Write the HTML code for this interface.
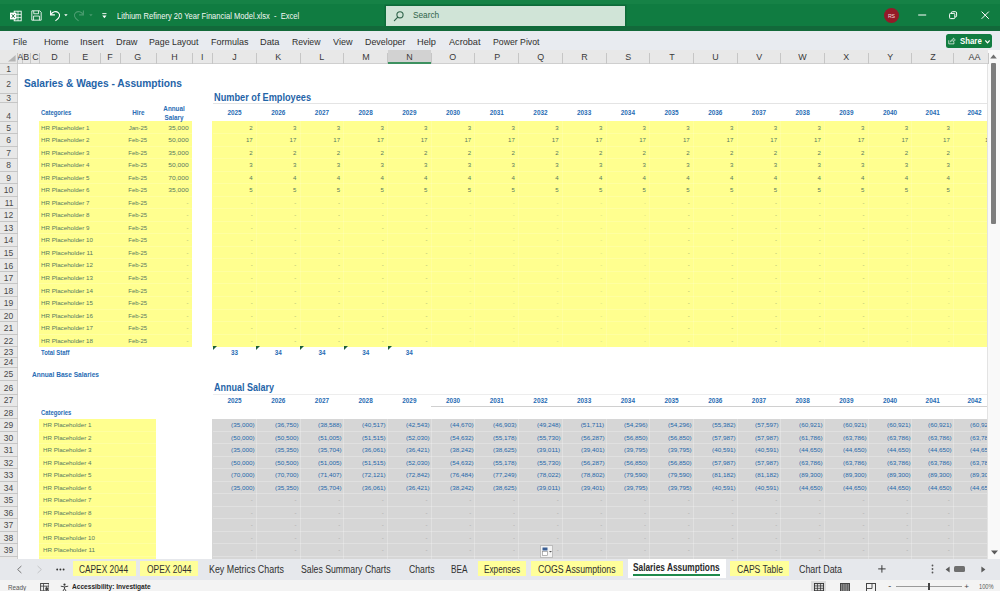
<!DOCTYPE html>
<html><head><meta charset="utf-8"><title>Excel</title>
<style>
html,body{margin:0;padding:0;}
body{width:1000px;height:591px;overflow:hidden;background:#fff;font-family:"Liberation Sans",sans-serif;position:relative;}
#app{position:absolute;left:0;top:0;width:1000px;height:591px;overflow:hidden;}
#app div,#app span,#app svg{position:absolute;display:block;white-space:pre;}
</style></head><body><div id="app">
<!-- sheet -->
<div style="left:39.30px;top:121.00px;width:152.80px;height:225.59px;background:#ffff8f;"></div>
<div style="left:212.30px;top:121.00px;width:775.70px;height:225.59px;background:#ffff8f;"></div>
<div style="left:39.30px;top:418.80px;width:116.70px;height:140.10px;background:#ffff8f;"></div>
<div style="left:211.90px;top:418.80px;width:776.10px;height:140.10px;background:#d6d6d6;"></div>
<div style="left:39.30px;top:133.03px;width:152.80px;height:1.00px;background:rgba(255,255,255,.16);"></div>
<div style="left:212.70px;top:133.03px;width:775.30px;height:1.00px;background:rgba(255,255,255,.16);"></div>
<div style="left:39.30px;top:145.57px;width:152.80px;height:1.00px;background:rgba(255,255,255,.16);"></div>
<div style="left:212.70px;top:145.57px;width:775.30px;height:1.00px;background:rgba(255,255,255,.16);"></div>
<div style="left:39.30px;top:158.10px;width:152.80px;height:1.00px;background:rgba(255,255,255,.16);"></div>
<div style="left:212.70px;top:158.10px;width:775.30px;height:1.00px;background:rgba(255,255,255,.16);"></div>
<div style="left:39.30px;top:170.63px;width:152.80px;height:1.00px;background:rgba(255,255,255,.16);"></div>
<div style="left:212.70px;top:170.63px;width:775.30px;height:1.00px;background:rgba(255,255,255,.16);"></div>
<div style="left:39.30px;top:183.16px;width:152.80px;height:1.00px;background:rgba(255,255,255,.16);"></div>
<div style="left:212.70px;top:183.16px;width:775.30px;height:1.00px;background:rgba(255,255,255,.16);"></div>
<div style="left:39.30px;top:195.70px;width:152.80px;height:1.00px;background:rgba(255,255,255,.16);"></div>
<div style="left:212.70px;top:195.70px;width:775.30px;height:1.00px;background:rgba(255,255,255,.16);"></div>
<div style="left:39.30px;top:208.23px;width:152.80px;height:1.00px;background:rgba(255,255,255,.16);"></div>
<div style="left:212.70px;top:208.23px;width:775.30px;height:1.00px;background:rgba(255,255,255,.16);"></div>
<div style="left:39.30px;top:220.76px;width:152.80px;height:1.00px;background:rgba(255,255,255,.16);"></div>
<div style="left:212.70px;top:220.76px;width:775.30px;height:1.00px;background:rgba(255,255,255,.16);"></div>
<div style="left:39.30px;top:233.30px;width:152.80px;height:1.00px;background:rgba(255,255,255,.16);"></div>
<div style="left:212.70px;top:233.30px;width:775.30px;height:1.00px;background:rgba(255,255,255,.16);"></div>
<div style="left:39.30px;top:245.83px;width:152.80px;height:1.00px;background:rgba(255,255,255,.16);"></div>
<div style="left:212.70px;top:245.83px;width:775.30px;height:1.00px;background:rgba(255,255,255,.16);"></div>
<div style="left:39.30px;top:258.36px;width:152.80px;height:1.00px;background:rgba(255,255,255,.16);"></div>
<div style="left:212.70px;top:258.36px;width:775.30px;height:1.00px;background:rgba(255,255,255,.16);"></div>
<div style="left:39.30px;top:270.90px;width:152.80px;height:1.00px;background:rgba(255,255,255,.16);"></div>
<div style="left:212.70px;top:270.90px;width:775.30px;height:1.00px;background:rgba(255,255,255,.16);"></div>
<div style="left:39.30px;top:283.43px;width:152.80px;height:1.00px;background:rgba(255,255,255,.16);"></div>
<div style="left:212.70px;top:283.43px;width:775.30px;height:1.00px;background:rgba(255,255,255,.16);"></div>
<div style="left:39.30px;top:295.96px;width:152.80px;height:1.00px;background:rgba(255,255,255,.16);"></div>
<div style="left:212.70px;top:295.96px;width:775.30px;height:1.00px;background:rgba(255,255,255,.16);"></div>
<div style="left:39.30px;top:308.50px;width:152.80px;height:1.00px;background:rgba(255,255,255,.16);"></div>
<div style="left:212.70px;top:308.50px;width:775.30px;height:1.00px;background:rgba(255,255,255,.16);"></div>
<div style="left:39.30px;top:321.03px;width:152.80px;height:1.00px;background:rgba(255,255,255,.16);"></div>
<div style="left:212.70px;top:321.03px;width:775.30px;height:1.00px;background:rgba(255,255,255,.16);"></div>
<div style="left:39.30px;top:333.56px;width:152.80px;height:1.00px;background:rgba(255,255,255,.16);"></div>
<div style="left:212.70px;top:333.56px;width:775.30px;height:1.00px;background:rgba(255,255,255,.16);"></div>
<div style="left:255.90px;top:121.00px;width:1.00px;height:225.59px;background:rgba(255,255,255,.14);"></div>
<div style="left:255.90px;top:418.80px;width:1.00px;height:140.10px;background:rgba(255,255,255,.24);"></div>
<div style="left:299.60px;top:121.00px;width:1.00px;height:225.59px;background:rgba(255,255,255,.14);"></div>
<div style="left:299.60px;top:418.80px;width:1.00px;height:140.10px;background:rgba(255,255,255,.24);"></div>
<div style="left:343.30px;top:121.00px;width:1.00px;height:225.59px;background:rgba(255,255,255,.14);"></div>
<div style="left:343.30px;top:418.80px;width:1.00px;height:140.10px;background:rgba(255,255,255,.24);"></div>
<div style="left:387.00px;top:121.00px;width:1.00px;height:225.59px;background:rgba(255,255,255,.14);"></div>
<div style="left:387.00px;top:418.80px;width:1.00px;height:140.10px;background:rgba(255,255,255,.24);"></div>
<div style="left:430.70px;top:121.00px;width:1.00px;height:225.59px;background:rgba(255,255,255,.14);"></div>
<div style="left:430.70px;top:418.80px;width:1.00px;height:140.10px;background:rgba(255,255,255,.24);"></div>
<div style="left:474.40px;top:121.00px;width:1.00px;height:225.59px;background:rgba(255,255,255,.14);"></div>
<div style="left:474.40px;top:418.80px;width:1.00px;height:140.10px;background:rgba(255,255,255,.24);"></div>
<div style="left:518.10px;top:121.00px;width:1.00px;height:225.59px;background:rgba(255,255,255,.14);"></div>
<div style="left:518.10px;top:418.80px;width:1.00px;height:140.10px;background:rgba(255,255,255,.24);"></div>
<div style="left:561.80px;top:121.00px;width:1.00px;height:225.59px;background:rgba(255,255,255,.14);"></div>
<div style="left:561.80px;top:418.80px;width:1.00px;height:140.10px;background:rgba(255,255,255,.24);"></div>
<div style="left:605.50px;top:121.00px;width:1.00px;height:225.59px;background:rgba(255,255,255,.14);"></div>
<div style="left:605.50px;top:418.80px;width:1.00px;height:140.10px;background:rgba(255,255,255,.24);"></div>
<div style="left:649.20px;top:121.00px;width:1.00px;height:225.59px;background:rgba(255,255,255,.14);"></div>
<div style="left:649.20px;top:418.80px;width:1.00px;height:140.10px;background:rgba(255,255,255,.24);"></div>
<div style="left:692.90px;top:121.00px;width:1.00px;height:225.59px;background:rgba(255,255,255,.14);"></div>
<div style="left:692.90px;top:418.80px;width:1.00px;height:140.10px;background:rgba(255,255,255,.24);"></div>
<div style="left:736.60px;top:121.00px;width:1.00px;height:225.59px;background:rgba(255,255,255,.14);"></div>
<div style="left:736.60px;top:418.80px;width:1.00px;height:140.10px;background:rgba(255,255,255,.24);"></div>
<div style="left:780.30px;top:121.00px;width:1.00px;height:225.59px;background:rgba(255,255,255,.14);"></div>
<div style="left:780.30px;top:418.80px;width:1.00px;height:140.10px;background:rgba(255,255,255,.24);"></div>
<div style="left:824.00px;top:121.00px;width:1.00px;height:225.59px;background:rgba(255,255,255,.14);"></div>
<div style="left:824.00px;top:418.80px;width:1.00px;height:140.10px;background:rgba(255,255,255,.24);"></div>
<div style="left:867.70px;top:121.00px;width:1.00px;height:225.59px;background:rgba(255,255,255,.14);"></div>
<div style="left:867.70px;top:418.80px;width:1.00px;height:140.10px;background:rgba(255,255,255,.24);"></div>
<div style="left:911.40px;top:121.00px;width:1.00px;height:225.59px;background:rgba(255,255,255,.14);"></div>
<div style="left:911.40px;top:418.80px;width:1.00px;height:140.10px;background:rgba(255,255,255,.24);"></div>
<div style="left:953.00px;top:121.00px;width:1.00px;height:225.59px;background:rgba(255,255,255,.14);"></div>
<div style="left:953.00px;top:418.80px;width:1.00px;height:140.10px;background:rgba(255,255,255,.24);"></div>
<div style="left:212.70px;top:430.80px;width:775.30px;height:1.00px;background:rgba(255,255,255,.24);"></div>
<div style="left:39.30px;top:430.80px;width:116.70px;height:1.00px;background:rgba(255,255,255,.16);"></div>
<div style="left:212.70px;top:443.30px;width:775.30px;height:1.00px;background:rgba(255,255,255,.24);"></div>
<div style="left:39.30px;top:443.30px;width:116.70px;height:1.00px;background:rgba(255,255,255,.16);"></div>
<div style="left:212.70px;top:455.80px;width:775.30px;height:1.00px;background:rgba(255,255,255,.24);"></div>
<div style="left:39.30px;top:455.80px;width:116.70px;height:1.00px;background:rgba(255,255,255,.16);"></div>
<div style="left:212.70px;top:468.30px;width:775.30px;height:1.00px;background:rgba(255,255,255,.24);"></div>
<div style="left:39.30px;top:468.30px;width:116.70px;height:1.00px;background:rgba(255,255,255,.16);"></div>
<div style="left:212.70px;top:480.80px;width:775.30px;height:1.00px;background:rgba(255,255,255,.24);"></div>
<div style="left:39.30px;top:480.80px;width:116.70px;height:1.00px;background:rgba(255,255,255,.16);"></div>
<div style="left:212.70px;top:493.30px;width:775.30px;height:1.00px;background:rgba(255,255,255,.24);"></div>
<div style="left:39.30px;top:493.30px;width:116.70px;height:1.00px;background:rgba(255,255,255,.16);"></div>
<div style="left:212.70px;top:505.80px;width:775.30px;height:1.00px;background:rgba(255,255,255,.24);"></div>
<div style="left:39.30px;top:505.80px;width:116.70px;height:1.00px;background:rgba(255,255,255,.16);"></div>
<div style="left:212.70px;top:518.30px;width:775.30px;height:1.00px;background:rgba(255,255,255,.24);"></div>
<div style="left:39.30px;top:518.30px;width:116.70px;height:1.00px;background:rgba(255,255,255,.16);"></div>
<div style="left:212.70px;top:530.80px;width:775.30px;height:1.00px;background:rgba(255,255,255,.24);"></div>
<div style="left:39.30px;top:530.80px;width:116.70px;height:1.00px;background:rgba(255,255,255,.16);"></div>
<div style="left:212.70px;top:543.30px;width:775.30px;height:1.00px;background:rgba(255,255,255,.24);"></div>
<div style="left:39.30px;top:543.30px;width:116.70px;height:1.00px;background:rgba(255,255,255,.16);"></div>
<div style="left:212.70px;top:555.80px;width:775.30px;height:1.00px;background:rgba(255,255,255,.24);"></div>
<div style="left:39.30px;top:555.80px;width:116.70px;height:1.00px;background:rgba(255,255,255,.16);"></div>
<div style="left:212.70px;top:102.50px;width:775.30px;height:1.00px;background:#e4e4e4;"></div>
<div style="left:212.70px;top:393.50px;width:775.30px;height:1.00px;background:#ededed;"></div>
<div style="left:431.20px;top:405.50px;width:556.80px;height:1.00px;background:#d0d0d0;"></div>
<span style="left:24.00px;top:77.10px;font-size:11.5px;line-height:13.80px;color:#1f64a8;font-weight:bold;transform:scaleX(0.887);transform-origin:left center;">Salaries &amp; Wages - Assumptions</span>
<span style="left:214.00px;top:91.60px;font-size:10px;line-height:12.00px;color:#1f64a8;font-weight:bold;transform:scaleX(0.919);transform-origin:left center;">Number of Employees</span>
<span style="left:214.00px;top:382.00px;font-size:10px;line-height:12.00px;color:#1f64a8;font-weight:bold;transform:scaleX(0.900);transform-origin:left center;">Annual Salary</span>
<span style="left:32.00px;top:370.70px;font-size:6.5px;line-height:7.80px;color:#286cb4;font-weight:bold;transform:scaleX(1.013);transform-origin:left center;">Annual Base Salaries</span>
<span style="left:40.50px;top:109.12px;font-size:6.3px;line-height:7.56px;color:#286cb4;font-weight:bold;transform:scaleX(0.931);transform-origin:left center;">Categories</span>
<span style="left:132.17px;top:109.12px;font-size:6.3px;line-height:7.56px;color:#286cb4;font-weight:bold;">Hire</span>
<span style="left:163.33px;top:104.82px;font-size:6.3px;line-height:7.56px;color:#286cb4;font-weight:bold;">Annual</span>
<span style="left:164.54px;top:113.82px;font-size:6.3px;line-height:7.56px;color:#286cb4;font-weight:bold;">Salary</span>
<span style="left:40.50px;top:409.02px;font-size:6.3px;line-height:7.56px;color:#286cb4;font-weight:bold;transform:scaleX(0.931);transform-origin:left center;">Categories</span>
<span style="left:40.60px;top:349.42px;font-size:6.3px;line-height:7.56px;color:#286cb4;font-weight:bold;transform:scaleX(0.936);transform-origin:left center;">Total Staff</span>
<span style="left:227.43px;top:109.06px;font-size:6.4px;line-height:7.68px;color:#286cb4;font-weight:bold;">2025</span>
<span style="left:227.43px;top:397.16px;font-size:6.4px;line-height:7.68px;color:#286cb4;font-weight:bold;">2025</span>
<span style="left:271.13px;top:109.06px;font-size:6.4px;line-height:7.68px;color:#286cb4;font-weight:bold;">2026</span>
<span style="left:271.13px;top:397.16px;font-size:6.4px;line-height:7.68px;color:#286cb4;font-weight:bold;">2026</span>
<span style="left:314.83px;top:109.06px;font-size:6.4px;line-height:7.68px;color:#286cb4;font-weight:bold;">2027</span>
<span style="left:314.83px;top:397.16px;font-size:6.4px;line-height:7.68px;color:#286cb4;font-weight:bold;">2027</span>
<span style="left:358.53px;top:109.06px;font-size:6.4px;line-height:7.68px;color:#286cb4;font-weight:bold;">2028</span>
<span style="left:358.53px;top:397.16px;font-size:6.4px;line-height:7.68px;color:#286cb4;font-weight:bold;">2028</span>
<span style="left:402.23px;top:109.06px;font-size:6.4px;line-height:7.68px;color:#286cb4;font-weight:bold;">2029</span>
<span style="left:402.23px;top:397.16px;font-size:6.4px;line-height:7.68px;color:#286cb4;font-weight:bold;">2029</span>
<span style="left:445.93px;top:109.06px;font-size:6.4px;line-height:7.68px;color:#286cb4;font-weight:bold;">2030</span>
<span style="left:445.93px;top:397.16px;font-size:6.4px;line-height:7.68px;color:#286cb4;font-weight:bold;">2030</span>
<span style="left:489.63px;top:109.06px;font-size:6.4px;line-height:7.68px;color:#286cb4;font-weight:bold;">2031</span>
<span style="left:489.63px;top:397.16px;font-size:6.4px;line-height:7.68px;color:#286cb4;font-weight:bold;">2031</span>
<span style="left:533.33px;top:109.06px;font-size:6.4px;line-height:7.68px;color:#286cb4;font-weight:bold;">2032</span>
<span style="left:533.33px;top:397.16px;font-size:6.4px;line-height:7.68px;color:#286cb4;font-weight:bold;">2032</span>
<span style="left:577.03px;top:109.06px;font-size:6.4px;line-height:7.68px;color:#286cb4;font-weight:bold;">2033</span>
<span style="left:577.03px;top:397.16px;font-size:6.4px;line-height:7.68px;color:#286cb4;font-weight:bold;">2033</span>
<span style="left:620.73px;top:109.06px;font-size:6.4px;line-height:7.68px;color:#286cb4;font-weight:bold;">2034</span>
<span style="left:620.73px;top:397.16px;font-size:6.4px;line-height:7.68px;color:#286cb4;font-weight:bold;">2034</span>
<span style="left:664.43px;top:109.06px;font-size:6.4px;line-height:7.68px;color:#286cb4;font-weight:bold;">2035</span>
<span style="left:664.43px;top:397.16px;font-size:6.4px;line-height:7.68px;color:#286cb4;font-weight:bold;">2035</span>
<span style="left:708.13px;top:109.06px;font-size:6.4px;line-height:7.68px;color:#286cb4;font-weight:bold;">2036</span>
<span style="left:708.13px;top:397.16px;font-size:6.4px;line-height:7.68px;color:#286cb4;font-weight:bold;">2036</span>
<span style="left:751.83px;top:109.06px;font-size:6.4px;line-height:7.68px;color:#286cb4;font-weight:bold;">2037</span>
<span style="left:751.83px;top:397.16px;font-size:6.4px;line-height:7.68px;color:#286cb4;font-weight:bold;">2037</span>
<span style="left:795.53px;top:109.06px;font-size:6.4px;line-height:7.68px;color:#286cb4;font-weight:bold;">2038</span>
<span style="left:795.53px;top:397.16px;font-size:6.4px;line-height:7.68px;color:#286cb4;font-weight:bold;">2038</span>
<span style="left:839.23px;top:109.06px;font-size:6.4px;line-height:7.68px;color:#286cb4;font-weight:bold;">2039</span>
<span style="left:839.23px;top:397.16px;font-size:6.4px;line-height:7.68px;color:#286cb4;font-weight:bold;">2039</span>
<span style="left:882.93px;top:109.06px;font-size:6.4px;line-height:7.68px;color:#286cb4;font-weight:bold;">2040</span>
<span style="left:882.93px;top:397.16px;font-size:6.4px;line-height:7.68px;color:#286cb4;font-weight:bold;">2040</span>
<span style="left:925.58px;top:109.06px;font-size:6.4px;line-height:7.68px;color:#286cb4;font-weight:bold;">2041</span>
<span style="left:925.58px;top:397.16px;font-size:6.4px;line-height:7.68px;color:#286cb4;font-weight:bold;">2041</span>
<span style="left:967.38px;top:109.06px;font-size:6.4px;line-height:7.68px;color:#286cb4;font-weight:bold;">2042</span>
<span style="left:967.38px;top:397.16px;font-size:6.4px;line-height:7.68px;color:#286cb4;font-weight:bold;">2042</span>
<span style="left:41.00px;top:123.61px;font-size:6.1px;line-height:7.32px;color:#56795f;transform:scaleX(1.014);transform-origin:left center;">HR Placeholder 1</span>
<span style="left:128.67px;top:123.61px;font-size:6.1px;line-height:7.32px;color:#56795f;">Jan-25</span>
<span style="left:170.34px;top:123.61px;font-size:6.1px;line-height:7.32px;color:#56795f;transform:scaleX(1.093);transform-origin:right center;">35,000</span>
<span style="left:249.31px;top:123.61px;font-size:6.1px;line-height:7.32px;color:#56795f;">2</span>
<span style="left:293.01px;top:123.61px;font-size:6.1px;line-height:7.32px;color:#56795f;">3</span>
<span style="left:336.71px;top:123.61px;font-size:6.1px;line-height:7.32px;color:#56795f;">3</span>
<span style="left:380.41px;top:123.61px;font-size:6.1px;line-height:7.32px;color:#56795f;">3</span>
<span style="left:424.11px;top:123.61px;font-size:6.1px;line-height:7.32px;color:#56795f;">3</span>
<span style="left:467.81px;top:123.61px;font-size:6.1px;line-height:7.32px;color:#56795f;">3</span>
<span style="left:511.51px;top:123.61px;font-size:6.1px;line-height:7.32px;color:#56795f;">3</span>
<span style="left:555.21px;top:123.61px;font-size:6.1px;line-height:7.32px;color:#56795f;">3</span>
<span style="left:598.91px;top:123.61px;font-size:6.1px;line-height:7.32px;color:#56795f;">3</span>
<span style="left:642.61px;top:123.61px;font-size:6.1px;line-height:7.32px;color:#56795f;">3</span>
<span style="left:686.31px;top:123.61px;font-size:6.1px;line-height:7.32px;color:#56795f;">3</span>
<span style="left:730.01px;top:123.61px;font-size:6.1px;line-height:7.32px;color:#56795f;">3</span>
<span style="left:773.71px;top:123.61px;font-size:6.1px;line-height:7.32px;color:#56795f;">3</span>
<span style="left:817.41px;top:123.61px;font-size:6.1px;line-height:7.32px;color:#56795f;">3</span>
<span style="left:861.11px;top:123.61px;font-size:6.1px;line-height:7.32px;color:#56795f;">3</span>
<span style="left:904.81px;top:123.61px;font-size:6.1px;line-height:7.32px;color:#56795f;">3</span>
<span style="left:946.41px;top:123.61px;font-size:6.1px;line-height:7.32px;color:#56795f;">3</span>
<span style="left:988.41px;top:123.61px;font-size:6.1px;line-height:7.32px;color:#56795f;">3</span>
<span style="left:41.00px;top:136.14px;font-size:6.1px;line-height:7.32px;color:#56795f;transform:scaleX(1.014);transform-origin:left center;">HR Placeholder 2</span>
<span style="left:128.34px;top:136.14px;font-size:6.1px;line-height:7.32px;color:#56795f;transform:scaleX(0.967);transform-origin:center center;">Feb-25</span>
<span style="left:170.34px;top:136.14px;font-size:6.1px;line-height:7.32px;color:#56795f;transform:scaleX(1.093);transform-origin:right center;">50,000</span>
<span style="left:245.91px;top:136.14px;font-size:6.1px;line-height:7.32px;color:#56795f;">17</span>
<span style="left:289.61px;top:136.14px;font-size:6.1px;line-height:7.32px;color:#56795f;">17</span>
<span style="left:333.31px;top:136.14px;font-size:6.1px;line-height:7.32px;color:#56795f;">17</span>
<span style="left:377.01px;top:136.14px;font-size:6.1px;line-height:7.32px;color:#56795f;">17</span>
<span style="left:420.71px;top:136.14px;font-size:6.1px;line-height:7.32px;color:#56795f;">17</span>
<span style="left:464.41px;top:136.14px;font-size:6.1px;line-height:7.32px;color:#56795f;">17</span>
<span style="left:508.11px;top:136.14px;font-size:6.1px;line-height:7.32px;color:#56795f;">17</span>
<span style="left:551.81px;top:136.14px;font-size:6.1px;line-height:7.32px;color:#56795f;">17</span>
<span style="left:595.51px;top:136.14px;font-size:6.1px;line-height:7.32px;color:#56795f;">17</span>
<span style="left:639.21px;top:136.14px;font-size:6.1px;line-height:7.32px;color:#56795f;">17</span>
<span style="left:682.91px;top:136.14px;font-size:6.1px;line-height:7.32px;color:#56795f;">17</span>
<span style="left:726.61px;top:136.14px;font-size:6.1px;line-height:7.32px;color:#56795f;">17</span>
<span style="left:770.31px;top:136.14px;font-size:6.1px;line-height:7.32px;color:#56795f;">17</span>
<span style="left:814.01px;top:136.14px;font-size:6.1px;line-height:7.32px;color:#56795f;">17</span>
<span style="left:857.71px;top:136.14px;font-size:6.1px;line-height:7.32px;color:#56795f;">17</span>
<span style="left:901.41px;top:136.14px;font-size:6.1px;line-height:7.32px;color:#56795f;">17</span>
<span style="left:943.01px;top:136.14px;font-size:6.1px;line-height:7.32px;color:#56795f;">17</span>
<span style="left:985.01px;top:136.14px;font-size:6.1px;line-height:7.32px;color:#56795f;">17</span>
<span style="left:41.00px;top:148.67px;font-size:6.1px;line-height:7.32px;color:#56795f;transform:scaleX(1.014);transform-origin:left center;">HR Placeholder 3</span>
<span style="left:128.34px;top:148.67px;font-size:6.1px;line-height:7.32px;color:#56795f;transform:scaleX(0.967);transform-origin:center center;">Feb-25</span>
<span style="left:170.34px;top:148.67px;font-size:6.1px;line-height:7.32px;color:#56795f;transform:scaleX(1.093);transform-origin:right center;">35,000</span>
<span style="left:249.31px;top:148.67px;font-size:6.1px;line-height:7.32px;color:#56795f;">2</span>
<span style="left:293.01px;top:148.67px;font-size:6.1px;line-height:7.32px;color:#56795f;">2</span>
<span style="left:336.71px;top:148.67px;font-size:6.1px;line-height:7.32px;color:#56795f;">2</span>
<span style="left:380.41px;top:148.67px;font-size:6.1px;line-height:7.32px;color:#56795f;">2</span>
<span style="left:424.11px;top:148.67px;font-size:6.1px;line-height:7.32px;color:#56795f;">2</span>
<span style="left:467.81px;top:148.67px;font-size:6.1px;line-height:7.32px;color:#56795f;">2</span>
<span style="left:511.51px;top:148.67px;font-size:6.1px;line-height:7.32px;color:#56795f;">2</span>
<span style="left:555.21px;top:148.67px;font-size:6.1px;line-height:7.32px;color:#56795f;">2</span>
<span style="left:598.91px;top:148.67px;font-size:6.1px;line-height:7.32px;color:#56795f;">2</span>
<span style="left:642.61px;top:148.67px;font-size:6.1px;line-height:7.32px;color:#56795f;">2</span>
<span style="left:686.31px;top:148.67px;font-size:6.1px;line-height:7.32px;color:#56795f;">2</span>
<span style="left:730.01px;top:148.67px;font-size:6.1px;line-height:7.32px;color:#56795f;">2</span>
<span style="left:773.71px;top:148.67px;font-size:6.1px;line-height:7.32px;color:#56795f;">2</span>
<span style="left:817.41px;top:148.67px;font-size:6.1px;line-height:7.32px;color:#56795f;">2</span>
<span style="left:861.11px;top:148.67px;font-size:6.1px;line-height:7.32px;color:#56795f;">2</span>
<span style="left:904.81px;top:148.67px;font-size:6.1px;line-height:7.32px;color:#56795f;">2</span>
<span style="left:946.41px;top:148.67px;font-size:6.1px;line-height:7.32px;color:#56795f;">2</span>
<span style="left:988.41px;top:148.67px;font-size:6.1px;line-height:7.32px;color:#56795f;">2</span>
<span style="left:41.00px;top:161.21px;font-size:6.1px;line-height:7.32px;color:#56795f;transform:scaleX(1.014);transform-origin:left center;">HR Placeholder 4</span>
<span style="left:128.34px;top:161.21px;font-size:6.1px;line-height:7.32px;color:#56795f;transform:scaleX(0.967);transform-origin:center center;">Feb-25</span>
<span style="left:170.34px;top:161.21px;font-size:6.1px;line-height:7.32px;color:#56795f;transform:scaleX(1.093);transform-origin:right center;">50,000</span>
<span style="left:249.31px;top:161.21px;font-size:6.1px;line-height:7.32px;color:#56795f;">3</span>
<span style="left:293.01px;top:161.21px;font-size:6.1px;line-height:7.32px;color:#56795f;">3</span>
<span style="left:336.71px;top:161.21px;font-size:6.1px;line-height:7.32px;color:#56795f;">3</span>
<span style="left:380.41px;top:161.21px;font-size:6.1px;line-height:7.32px;color:#56795f;">3</span>
<span style="left:424.11px;top:161.21px;font-size:6.1px;line-height:7.32px;color:#56795f;">3</span>
<span style="left:467.81px;top:161.21px;font-size:6.1px;line-height:7.32px;color:#56795f;">3</span>
<span style="left:511.51px;top:161.21px;font-size:6.1px;line-height:7.32px;color:#56795f;">3</span>
<span style="left:555.21px;top:161.21px;font-size:6.1px;line-height:7.32px;color:#56795f;">3</span>
<span style="left:598.91px;top:161.21px;font-size:6.1px;line-height:7.32px;color:#56795f;">3</span>
<span style="left:642.61px;top:161.21px;font-size:6.1px;line-height:7.32px;color:#56795f;">3</span>
<span style="left:686.31px;top:161.21px;font-size:6.1px;line-height:7.32px;color:#56795f;">3</span>
<span style="left:730.01px;top:161.21px;font-size:6.1px;line-height:7.32px;color:#56795f;">3</span>
<span style="left:773.71px;top:161.21px;font-size:6.1px;line-height:7.32px;color:#56795f;">3</span>
<span style="left:817.41px;top:161.21px;font-size:6.1px;line-height:7.32px;color:#56795f;">3</span>
<span style="left:861.11px;top:161.21px;font-size:6.1px;line-height:7.32px;color:#56795f;">3</span>
<span style="left:904.81px;top:161.21px;font-size:6.1px;line-height:7.32px;color:#56795f;">3</span>
<span style="left:946.41px;top:161.21px;font-size:6.1px;line-height:7.32px;color:#56795f;">3</span>
<span style="left:988.41px;top:161.21px;font-size:6.1px;line-height:7.32px;color:#56795f;">3</span>
<span style="left:41.00px;top:173.74px;font-size:6.1px;line-height:7.32px;color:#56795f;transform:scaleX(1.014);transform-origin:left center;">HR Placeholder 5</span>
<span style="left:128.34px;top:173.74px;font-size:6.1px;line-height:7.32px;color:#56795f;transform:scaleX(0.967);transform-origin:center center;">Feb-25</span>
<span style="left:170.34px;top:173.74px;font-size:6.1px;line-height:7.32px;color:#56795f;transform:scaleX(1.093);transform-origin:right center;">70,000</span>
<span style="left:249.31px;top:173.74px;font-size:6.1px;line-height:7.32px;color:#56795f;">4</span>
<span style="left:293.01px;top:173.74px;font-size:6.1px;line-height:7.32px;color:#56795f;">4</span>
<span style="left:336.71px;top:173.74px;font-size:6.1px;line-height:7.32px;color:#56795f;">4</span>
<span style="left:380.41px;top:173.74px;font-size:6.1px;line-height:7.32px;color:#56795f;">4</span>
<span style="left:424.11px;top:173.74px;font-size:6.1px;line-height:7.32px;color:#56795f;">4</span>
<span style="left:467.81px;top:173.74px;font-size:6.1px;line-height:7.32px;color:#56795f;">4</span>
<span style="left:511.51px;top:173.74px;font-size:6.1px;line-height:7.32px;color:#56795f;">4</span>
<span style="left:555.21px;top:173.74px;font-size:6.1px;line-height:7.32px;color:#56795f;">4</span>
<span style="left:598.91px;top:173.74px;font-size:6.1px;line-height:7.32px;color:#56795f;">4</span>
<span style="left:642.61px;top:173.74px;font-size:6.1px;line-height:7.32px;color:#56795f;">4</span>
<span style="left:686.31px;top:173.74px;font-size:6.1px;line-height:7.32px;color:#56795f;">4</span>
<span style="left:730.01px;top:173.74px;font-size:6.1px;line-height:7.32px;color:#56795f;">4</span>
<span style="left:773.71px;top:173.74px;font-size:6.1px;line-height:7.32px;color:#56795f;">4</span>
<span style="left:817.41px;top:173.74px;font-size:6.1px;line-height:7.32px;color:#56795f;">4</span>
<span style="left:861.11px;top:173.74px;font-size:6.1px;line-height:7.32px;color:#56795f;">4</span>
<span style="left:904.81px;top:173.74px;font-size:6.1px;line-height:7.32px;color:#56795f;">4</span>
<span style="left:946.41px;top:173.74px;font-size:6.1px;line-height:7.32px;color:#56795f;">4</span>
<span style="left:988.41px;top:173.74px;font-size:6.1px;line-height:7.32px;color:#56795f;">4</span>
<span style="left:41.00px;top:186.27px;font-size:6.1px;line-height:7.32px;color:#56795f;transform:scaleX(1.014);transform-origin:left center;">HR Placeholder 6</span>
<span style="left:128.34px;top:186.27px;font-size:6.1px;line-height:7.32px;color:#56795f;transform:scaleX(0.967);transform-origin:center center;">Feb-25</span>
<span style="left:170.34px;top:186.27px;font-size:6.1px;line-height:7.32px;color:#56795f;transform:scaleX(1.093);transform-origin:right center;">35,000</span>
<span style="left:249.31px;top:186.27px;font-size:6.1px;line-height:7.32px;color:#56795f;">5</span>
<span style="left:293.01px;top:186.27px;font-size:6.1px;line-height:7.32px;color:#56795f;">5</span>
<span style="left:336.71px;top:186.27px;font-size:6.1px;line-height:7.32px;color:#56795f;">5</span>
<span style="left:380.41px;top:186.27px;font-size:6.1px;line-height:7.32px;color:#56795f;">5</span>
<span style="left:424.11px;top:186.27px;font-size:6.1px;line-height:7.32px;color:#56795f;">5</span>
<span style="left:467.81px;top:186.27px;font-size:6.1px;line-height:7.32px;color:#56795f;">5</span>
<span style="left:511.51px;top:186.27px;font-size:6.1px;line-height:7.32px;color:#56795f;">5</span>
<span style="left:555.21px;top:186.27px;font-size:6.1px;line-height:7.32px;color:#56795f;">5</span>
<span style="left:598.91px;top:186.27px;font-size:6.1px;line-height:7.32px;color:#56795f;">5</span>
<span style="left:642.61px;top:186.27px;font-size:6.1px;line-height:7.32px;color:#56795f;">5</span>
<span style="left:686.31px;top:186.27px;font-size:6.1px;line-height:7.32px;color:#56795f;">5</span>
<span style="left:730.01px;top:186.27px;font-size:6.1px;line-height:7.32px;color:#56795f;">5</span>
<span style="left:773.71px;top:186.27px;font-size:6.1px;line-height:7.32px;color:#56795f;">5</span>
<span style="left:817.41px;top:186.27px;font-size:6.1px;line-height:7.32px;color:#56795f;">5</span>
<span style="left:861.11px;top:186.27px;font-size:6.1px;line-height:7.32px;color:#56795f;">5</span>
<span style="left:904.81px;top:186.27px;font-size:6.1px;line-height:7.32px;color:#56795f;">5</span>
<span style="left:946.41px;top:186.27px;font-size:6.1px;line-height:7.32px;color:#56795f;">5</span>
<span style="left:988.41px;top:186.27px;font-size:6.1px;line-height:7.32px;color:#56795f;">5</span>
<span style="left:41.00px;top:198.80px;font-size:6.1px;line-height:7.32px;color:#56795f;transform:scaleX(1.014);transform-origin:left center;">HR Placeholder 7</span>
<span style="left:128.34px;top:198.80px;font-size:6.1px;line-height:7.32px;color:#56795f;transform:scaleX(0.967);transform-origin:center center;">Feb-25</span>
<span style="left:186.47px;top:198.80px;font-size:6.1px;line-height:7.32px;color:#56795f;opacity:.55;">-</span>
<span style="left:250.67px;top:198.80px;font-size:6.1px;line-height:7.32px;color:#56795f;opacity:.6;">-</span>
<span style="left:294.37px;top:198.80px;font-size:6.1px;line-height:7.32px;color:#56795f;opacity:.6;">-</span>
<span style="left:338.07px;top:198.80px;font-size:6.1px;line-height:7.32px;color:#56795f;opacity:.6;">-</span>
<span style="left:381.77px;top:198.80px;font-size:6.1px;line-height:7.32px;color:#56795f;opacity:.6;">-</span>
<span style="left:425.47px;top:198.80px;font-size:6.1px;line-height:7.32px;color:#56795f;opacity:.6;">-</span>
<span style="left:469.17px;top:198.80px;font-size:6.1px;line-height:7.32px;color:#56795f;opacity:.3;">-</span>
<span style="left:512.87px;top:198.80px;font-size:6.1px;line-height:7.32px;color:#56795f;opacity:.3;">-</span>
<span style="left:556.57px;top:198.80px;font-size:6.1px;line-height:7.32px;color:#56795f;opacity:.3;">-</span>
<span style="left:600.27px;top:198.80px;font-size:6.1px;line-height:7.32px;color:#56795f;opacity:.3;">-</span>
<span style="left:643.97px;top:198.80px;font-size:6.1px;line-height:7.32px;color:#56795f;opacity:.3;">-</span>
<span style="left:687.67px;top:198.80px;font-size:6.1px;line-height:7.32px;color:#56795f;opacity:.6;">-</span>
<span style="left:731.37px;top:198.80px;font-size:6.1px;line-height:7.32px;color:#56795f;opacity:.6;">-</span>
<span style="left:775.07px;top:198.80px;font-size:6.1px;line-height:7.32px;color:#56795f;opacity:.6;">-</span>
<span style="left:818.77px;top:198.80px;font-size:6.1px;line-height:7.32px;color:#56795f;opacity:.6;">-</span>
<span style="left:862.47px;top:198.80px;font-size:6.1px;line-height:7.32px;color:#56795f;opacity:.6;">-</span>
<span style="left:906.17px;top:198.80px;font-size:6.1px;line-height:7.32px;color:#56795f;opacity:.3;">-</span>
<span style="left:947.77px;top:198.80px;font-size:6.1px;line-height:7.32px;color:#56795f;opacity:.3;">-</span>
<span style="left:989.77px;top:198.80px;font-size:6.1px;line-height:7.32px;color:#56795f;opacity:.3;">-</span>
<span style="left:41.00px;top:211.34px;font-size:6.1px;line-height:7.32px;color:#56795f;transform:scaleX(1.014);transform-origin:left center;">HR Placeholder 8</span>
<span style="left:128.34px;top:211.34px;font-size:6.1px;line-height:7.32px;color:#56795f;transform:scaleX(0.967);transform-origin:center center;">Feb-25</span>
<span style="left:186.47px;top:211.34px;font-size:6.1px;line-height:7.32px;color:#56795f;opacity:.55;">-</span>
<span style="left:250.67px;top:211.34px;font-size:6.1px;line-height:7.32px;color:#56795f;opacity:.6;">-</span>
<span style="left:294.37px;top:211.34px;font-size:6.1px;line-height:7.32px;color:#56795f;opacity:.6;">-</span>
<span style="left:338.07px;top:211.34px;font-size:6.1px;line-height:7.32px;color:#56795f;opacity:.6;">-</span>
<span style="left:381.77px;top:211.34px;font-size:6.1px;line-height:7.32px;color:#56795f;opacity:.6;">-</span>
<span style="left:425.47px;top:211.34px;font-size:6.1px;line-height:7.32px;color:#56795f;opacity:.6;">-</span>
<span style="left:469.17px;top:211.34px;font-size:6.1px;line-height:7.32px;color:#56795f;opacity:.3;">-</span>
<span style="left:512.87px;top:211.34px;font-size:6.1px;line-height:7.32px;color:#56795f;opacity:.3;">-</span>
<span style="left:556.57px;top:211.34px;font-size:6.1px;line-height:7.32px;color:#56795f;opacity:.3;">-</span>
<span style="left:600.27px;top:211.34px;font-size:6.1px;line-height:7.32px;color:#56795f;opacity:.3;">-</span>
<span style="left:643.97px;top:211.34px;font-size:6.1px;line-height:7.32px;color:#56795f;opacity:.3;">-</span>
<span style="left:687.67px;top:211.34px;font-size:6.1px;line-height:7.32px;color:#56795f;opacity:.6;">-</span>
<span style="left:731.37px;top:211.34px;font-size:6.1px;line-height:7.32px;color:#56795f;opacity:.6;">-</span>
<span style="left:775.07px;top:211.34px;font-size:6.1px;line-height:7.32px;color:#56795f;opacity:.6;">-</span>
<span style="left:818.77px;top:211.34px;font-size:6.1px;line-height:7.32px;color:#56795f;opacity:.6;">-</span>
<span style="left:862.47px;top:211.34px;font-size:6.1px;line-height:7.32px;color:#56795f;opacity:.6;">-</span>
<span style="left:906.17px;top:211.34px;font-size:6.1px;line-height:7.32px;color:#56795f;opacity:.3;">-</span>
<span style="left:947.77px;top:211.34px;font-size:6.1px;line-height:7.32px;color:#56795f;opacity:.3;">-</span>
<span style="left:989.77px;top:211.34px;font-size:6.1px;line-height:7.32px;color:#56795f;opacity:.3;">-</span>
<span style="left:41.00px;top:223.87px;font-size:6.1px;line-height:7.32px;color:#56795f;transform:scaleX(1.014);transform-origin:left center;">HR Placeholder 9</span>
<span style="left:128.34px;top:223.87px;font-size:6.1px;line-height:7.32px;color:#56795f;transform:scaleX(0.967);transform-origin:center center;">Feb-25</span>
<span style="left:186.47px;top:223.87px;font-size:6.1px;line-height:7.32px;color:#56795f;opacity:.55;">-</span>
<span style="left:250.67px;top:223.87px;font-size:6.1px;line-height:7.32px;color:#56795f;opacity:.6;">-</span>
<span style="left:294.37px;top:223.87px;font-size:6.1px;line-height:7.32px;color:#56795f;opacity:.6;">-</span>
<span style="left:338.07px;top:223.87px;font-size:6.1px;line-height:7.32px;color:#56795f;opacity:.6;">-</span>
<span style="left:381.77px;top:223.87px;font-size:6.1px;line-height:7.32px;color:#56795f;opacity:.6;">-</span>
<span style="left:425.47px;top:223.87px;font-size:6.1px;line-height:7.32px;color:#56795f;opacity:.6;">-</span>
<span style="left:469.17px;top:223.87px;font-size:6.1px;line-height:7.32px;color:#56795f;opacity:.3;">-</span>
<span style="left:512.87px;top:223.87px;font-size:6.1px;line-height:7.32px;color:#56795f;opacity:.3;">-</span>
<span style="left:556.57px;top:223.87px;font-size:6.1px;line-height:7.32px;color:#56795f;opacity:.3;">-</span>
<span style="left:600.27px;top:223.87px;font-size:6.1px;line-height:7.32px;color:#56795f;opacity:.3;">-</span>
<span style="left:643.97px;top:223.87px;font-size:6.1px;line-height:7.32px;color:#56795f;opacity:.3;">-</span>
<span style="left:687.67px;top:223.87px;font-size:6.1px;line-height:7.32px;color:#56795f;opacity:.6;">-</span>
<span style="left:731.37px;top:223.87px;font-size:6.1px;line-height:7.32px;color:#56795f;opacity:.6;">-</span>
<span style="left:775.07px;top:223.87px;font-size:6.1px;line-height:7.32px;color:#56795f;opacity:.6;">-</span>
<span style="left:818.77px;top:223.87px;font-size:6.1px;line-height:7.32px;color:#56795f;opacity:.6;">-</span>
<span style="left:862.47px;top:223.87px;font-size:6.1px;line-height:7.32px;color:#56795f;opacity:.6;">-</span>
<span style="left:906.17px;top:223.87px;font-size:6.1px;line-height:7.32px;color:#56795f;opacity:.3;">-</span>
<span style="left:947.77px;top:223.87px;font-size:6.1px;line-height:7.32px;color:#56795f;opacity:.3;">-</span>
<span style="left:989.77px;top:223.87px;font-size:6.1px;line-height:7.32px;color:#56795f;opacity:.3;">-</span>
<span style="left:41.00px;top:236.40px;font-size:6.1px;line-height:7.32px;color:#56795f;transform:scaleX(1.016);transform-origin:left center;">HR Placeholder 10</span>
<span style="left:128.34px;top:236.40px;font-size:6.1px;line-height:7.32px;color:#56795f;transform:scaleX(0.967);transform-origin:center center;">Feb-25</span>
<span style="left:186.47px;top:236.40px;font-size:6.1px;line-height:7.32px;color:#56795f;opacity:.55;">-</span>
<span style="left:250.67px;top:236.40px;font-size:6.1px;line-height:7.32px;color:#56795f;opacity:.6;">-</span>
<span style="left:294.37px;top:236.40px;font-size:6.1px;line-height:7.32px;color:#56795f;opacity:.6;">-</span>
<span style="left:338.07px;top:236.40px;font-size:6.1px;line-height:7.32px;color:#56795f;opacity:.6;">-</span>
<span style="left:381.77px;top:236.40px;font-size:6.1px;line-height:7.32px;color:#56795f;opacity:.6;">-</span>
<span style="left:425.47px;top:236.40px;font-size:6.1px;line-height:7.32px;color:#56795f;opacity:.6;">-</span>
<span style="left:469.17px;top:236.40px;font-size:6.1px;line-height:7.32px;color:#56795f;opacity:.3;">-</span>
<span style="left:512.87px;top:236.40px;font-size:6.1px;line-height:7.32px;color:#56795f;opacity:.3;">-</span>
<span style="left:556.57px;top:236.40px;font-size:6.1px;line-height:7.32px;color:#56795f;opacity:.3;">-</span>
<span style="left:600.27px;top:236.40px;font-size:6.1px;line-height:7.32px;color:#56795f;opacity:.3;">-</span>
<span style="left:643.97px;top:236.40px;font-size:6.1px;line-height:7.32px;color:#56795f;opacity:.3;">-</span>
<span style="left:687.67px;top:236.40px;font-size:6.1px;line-height:7.32px;color:#56795f;opacity:.6;">-</span>
<span style="left:731.37px;top:236.40px;font-size:6.1px;line-height:7.32px;color:#56795f;opacity:.6;">-</span>
<span style="left:775.07px;top:236.40px;font-size:6.1px;line-height:7.32px;color:#56795f;opacity:.6;">-</span>
<span style="left:818.77px;top:236.40px;font-size:6.1px;line-height:7.32px;color:#56795f;opacity:.6;">-</span>
<span style="left:862.47px;top:236.40px;font-size:6.1px;line-height:7.32px;color:#56795f;opacity:.6;">-</span>
<span style="left:906.17px;top:236.40px;font-size:6.1px;line-height:7.32px;color:#56795f;opacity:.3;">-</span>
<span style="left:947.77px;top:236.40px;font-size:6.1px;line-height:7.32px;color:#56795f;opacity:.3;">-</span>
<span style="left:989.77px;top:236.40px;font-size:6.1px;line-height:7.32px;color:#56795f;opacity:.3;">-</span>
<span style="left:41.00px;top:248.94px;font-size:6.1px;line-height:7.32px;color:#56795f;transform:scaleX(1.025);transform-origin:left center;">HR Placeholder 11</span>
<span style="left:128.34px;top:248.94px;font-size:6.1px;line-height:7.32px;color:#56795f;transform:scaleX(0.967);transform-origin:center center;">Feb-25</span>
<span style="left:186.47px;top:248.94px;font-size:6.1px;line-height:7.32px;color:#56795f;opacity:.55;">-</span>
<span style="left:250.67px;top:248.94px;font-size:6.1px;line-height:7.32px;color:#56795f;opacity:.6;">-</span>
<span style="left:294.37px;top:248.94px;font-size:6.1px;line-height:7.32px;color:#56795f;opacity:.6;">-</span>
<span style="left:338.07px;top:248.94px;font-size:6.1px;line-height:7.32px;color:#56795f;opacity:.6;">-</span>
<span style="left:381.77px;top:248.94px;font-size:6.1px;line-height:7.32px;color:#56795f;opacity:.6;">-</span>
<span style="left:425.47px;top:248.94px;font-size:6.1px;line-height:7.32px;color:#56795f;opacity:.6;">-</span>
<span style="left:469.17px;top:248.94px;font-size:6.1px;line-height:7.32px;color:#56795f;opacity:.3;">-</span>
<span style="left:512.87px;top:248.94px;font-size:6.1px;line-height:7.32px;color:#56795f;opacity:.3;">-</span>
<span style="left:556.57px;top:248.94px;font-size:6.1px;line-height:7.32px;color:#56795f;opacity:.3;">-</span>
<span style="left:600.27px;top:248.94px;font-size:6.1px;line-height:7.32px;color:#56795f;opacity:.3;">-</span>
<span style="left:643.97px;top:248.94px;font-size:6.1px;line-height:7.32px;color:#56795f;opacity:.3;">-</span>
<span style="left:687.67px;top:248.94px;font-size:6.1px;line-height:7.32px;color:#56795f;opacity:.6;">-</span>
<span style="left:731.37px;top:248.94px;font-size:6.1px;line-height:7.32px;color:#56795f;opacity:.6;">-</span>
<span style="left:775.07px;top:248.94px;font-size:6.1px;line-height:7.32px;color:#56795f;opacity:.6;">-</span>
<span style="left:818.77px;top:248.94px;font-size:6.1px;line-height:7.32px;color:#56795f;opacity:.6;">-</span>
<span style="left:862.47px;top:248.94px;font-size:6.1px;line-height:7.32px;color:#56795f;opacity:.6;">-</span>
<span style="left:906.17px;top:248.94px;font-size:6.1px;line-height:7.32px;color:#56795f;opacity:.3;">-</span>
<span style="left:947.77px;top:248.94px;font-size:6.1px;line-height:7.32px;color:#56795f;opacity:.3;">-</span>
<span style="left:989.77px;top:248.94px;font-size:6.1px;line-height:7.32px;color:#56795f;opacity:.3;">-</span>
<span style="left:41.00px;top:261.47px;font-size:6.1px;line-height:7.32px;color:#56795f;transform:scaleX(1.016);transform-origin:left center;">HR Placeholder 12</span>
<span style="left:128.34px;top:261.47px;font-size:6.1px;line-height:7.32px;color:#56795f;transform:scaleX(0.967);transform-origin:center center;">Feb-25</span>
<span style="left:186.47px;top:261.47px;font-size:6.1px;line-height:7.32px;color:#56795f;opacity:.55;">-</span>
<span style="left:250.67px;top:261.47px;font-size:6.1px;line-height:7.32px;color:#56795f;opacity:.6;">-</span>
<span style="left:294.37px;top:261.47px;font-size:6.1px;line-height:7.32px;color:#56795f;opacity:.6;">-</span>
<span style="left:338.07px;top:261.47px;font-size:6.1px;line-height:7.32px;color:#56795f;opacity:.6;">-</span>
<span style="left:381.77px;top:261.47px;font-size:6.1px;line-height:7.32px;color:#56795f;opacity:.6;">-</span>
<span style="left:425.47px;top:261.47px;font-size:6.1px;line-height:7.32px;color:#56795f;opacity:.6;">-</span>
<span style="left:469.17px;top:261.47px;font-size:6.1px;line-height:7.32px;color:#56795f;opacity:.3;">-</span>
<span style="left:512.87px;top:261.47px;font-size:6.1px;line-height:7.32px;color:#56795f;opacity:.3;">-</span>
<span style="left:556.57px;top:261.47px;font-size:6.1px;line-height:7.32px;color:#56795f;opacity:.3;">-</span>
<span style="left:600.27px;top:261.47px;font-size:6.1px;line-height:7.32px;color:#56795f;opacity:.3;">-</span>
<span style="left:643.97px;top:261.47px;font-size:6.1px;line-height:7.32px;color:#56795f;opacity:.3;">-</span>
<span style="left:687.67px;top:261.47px;font-size:6.1px;line-height:7.32px;color:#56795f;opacity:.6;">-</span>
<span style="left:731.37px;top:261.47px;font-size:6.1px;line-height:7.32px;color:#56795f;opacity:.6;">-</span>
<span style="left:775.07px;top:261.47px;font-size:6.1px;line-height:7.32px;color:#56795f;opacity:.6;">-</span>
<span style="left:818.77px;top:261.47px;font-size:6.1px;line-height:7.32px;color:#56795f;opacity:.6;">-</span>
<span style="left:862.47px;top:261.47px;font-size:6.1px;line-height:7.32px;color:#56795f;opacity:.6;">-</span>
<span style="left:906.17px;top:261.47px;font-size:6.1px;line-height:7.32px;color:#56795f;opacity:.3;">-</span>
<span style="left:947.77px;top:261.47px;font-size:6.1px;line-height:7.32px;color:#56795f;opacity:.3;">-</span>
<span style="left:989.77px;top:261.47px;font-size:6.1px;line-height:7.32px;color:#56795f;opacity:.3;">-</span>
<span style="left:41.00px;top:274.00px;font-size:6.1px;line-height:7.32px;color:#56795f;transform:scaleX(1.016);transform-origin:left center;">HR Placeholder 13</span>
<span style="left:128.34px;top:274.00px;font-size:6.1px;line-height:7.32px;color:#56795f;transform:scaleX(0.967);transform-origin:center center;">Feb-25</span>
<span style="left:186.47px;top:274.00px;font-size:6.1px;line-height:7.32px;color:#56795f;opacity:.55;">-</span>
<span style="left:250.67px;top:274.00px;font-size:6.1px;line-height:7.32px;color:#56795f;opacity:.6;">-</span>
<span style="left:294.37px;top:274.00px;font-size:6.1px;line-height:7.32px;color:#56795f;opacity:.6;">-</span>
<span style="left:338.07px;top:274.00px;font-size:6.1px;line-height:7.32px;color:#56795f;opacity:.6;">-</span>
<span style="left:381.77px;top:274.00px;font-size:6.1px;line-height:7.32px;color:#56795f;opacity:.6;">-</span>
<span style="left:425.47px;top:274.00px;font-size:6.1px;line-height:7.32px;color:#56795f;opacity:.6;">-</span>
<span style="left:469.17px;top:274.00px;font-size:6.1px;line-height:7.32px;color:#56795f;opacity:.3;">-</span>
<span style="left:512.87px;top:274.00px;font-size:6.1px;line-height:7.32px;color:#56795f;opacity:.3;">-</span>
<span style="left:556.57px;top:274.00px;font-size:6.1px;line-height:7.32px;color:#56795f;opacity:.3;">-</span>
<span style="left:600.27px;top:274.00px;font-size:6.1px;line-height:7.32px;color:#56795f;opacity:.3;">-</span>
<span style="left:643.97px;top:274.00px;font-size:6.1px;line-height:7.32px;color:#56795f;opacity:.3;">-</span>
<span style="left:687.67px;top:274.00px;font-size:6.1px;line-height:7.32px;color:#56795f;opacity:.6;">-</span>
<span style="left:731.37px;top:274.00px;font-size:6.1px;line-height:7.32px;color:#56795f;opacity:.6;">-</span>
<span style="left:775.07px;top:274.00px;font-size:6.1px;line-height:7.32px;color:#56795f;opacity:.6;">-</span>
<span style="left:818.77px;top:274.00px;font-size:6.1px;line-height:7.32px;color:#56795f;opacity:.6;">-</span>
<span style="left:862.47px;top:274.00px;font-size:6.1px;line-height:7.32px;color:#56795f;opacity:.6;">-</span>
<span style="left:906.17px;top:274.00px;font-size:6.1px;line-height:7.32px;color:#56795f;opacity:.3;">-</span>
<span style="left:947.77px;top:274.00px;font-size:6.1px;line-height:7.32px;color:#56795f;opacity:.3;">-</span>
<span style="left:989.77px;top:274.00px;font-size:6.1px;line-height:7.32px;color:#56795f;opacity:.3;">-</span>
<span style="left:41.00px;top:286.54px;font-size:6.1px;line-height:7.32px;color:#56795f;transform:scaleX(1.016);transform-origin:left center;">HR Placeholder 14</span>
<span style="left:128.34px;top:286.54px;font-size:6.1px;line-height:7.32px;color:#56795f;transform:scaleX(0.967);transform-origin:center center;">Feb-25</span>
<span style="left:186.47px;top:286.54px;font-size:6.1px;line-height:7.32px;color:#56795f;opacity:.55;">-</span>
<span style="left:250.67px;top:286.54px;font-size:6.1px;line-height:7.32px;color:#56795f;opacity:.6;">-</span>
<span style="left:294.37px;top:286.54px;font-size:6.1px;line-height:7.32px;color:#56795f;opacity:.6;">-</span>
<span style="left:338.07px;top:286.54px;font-size:6.1px;line-height:7.32px;color:#56795f;opacity:.6;">-</span>
<span style="left:381.77px;top:286.54px;font-size:6.1px;line-height:7.32px;color:#56795f;opacity:.6;">-</span>
<span style="left:425.47px;top:286.54px;font-size:6.1px;line-height:7.32px;color:#56795f;opacity:.6;">-</span>
<span style="left:469.17px;top:286.54px;font-size:6.1px;line-height:7.32px;color:#56795f;opacity:.3;">-</span>
<span style="left:512.87px;top:286.54px;font-size:6.1px;line-height:7.32px;color:#56795f;opacity:.3;">-</span>
<span style="left:556.57px;top:286.54px;font-size:6.1px;line-height:7.32px;color:#56795f;opacity:.3;">-</span>
<span style="left:600.27px;top:286.54px;font-size:6.1px;line-height:7.32px;color:#56795f;opacity:.3;">-</span>
<span style="left:643.97px;top:286.54px;font-size:6.1px;line-height:7.32px;color:#56795f;opacity:.3;">-</span>
<span style="left:687.67px;top:286.54px;font-size:6.1px;line-height:7.32px;color:#56795f;opacity:.6;">-</span>
<span style="left:731.37px;top:286.54px;font-size:6.1px;line-height:7.32px;color:#56795f;opacity:.6;">-</span>
<span style="left:775.07px;top:286.54px;font-size:6.1px;line-height:7.32px;color:#56795f;opacity:.6;">-</span>
<span style="left:818.77px;top:286.54px;font-size:6.1px;line-height:7.32px;color:#56795f;opacity:.6;">-</span>
<span style="left:862.47px;top:286.54px;font-size:6.1px;line-height:7.32px;color:#56795f;opacity:.6;">-</span>
<span style="left:906.17px;top:286.54px;font-size:6.1px;line-height:7.32px;color:#56795f;opacity:.3;">-</span>
<span style="left:947.77px;top:286.54px;font-size:6.1px;line-height:7.32px;color:#56795f;opacity:.3;">-</span>
<span style="left:989.77px;top:286.54px;font-size:6.1px;line-height:7.32px;color:#56795f;opacity:.3;">-</span>
<span style="left:41.00px;top:299.07px;font-size:6.1px;line-height:7.32px;color:#56795f;transform:scaleX(1.016);transform-origin:left center;">HR Placeholder 15</span>
<span style="left:128.34px;top:299.07px;font-size:6.1px;line-height:7.32px;color:#56795f;transform:scaleX(0.967);transform-origin:center center;">Feb-25</span>
<span style="left:186.47px;top:299.07px;font-size:6.1px;line-height:7.32px;color:#56795f;opacity:.55;">-</span>
<span style="left:250.67px;top:299.07px;font-size:6.1px;line-height:7.32px;color:#56795f;opacity:.6;">-</span>
<span style="left:294.37px;top:299.07px;font-size:6.1px;line-height:7.32px;color:#56795f;opacity:.6;">-</span>
<span style="left:338.07px;top:299.07px;font-size:6.1px;line-height:7.32px;color:#56795f;opacity:.6;">-</span>
<span style="left:381.77px;top:299.07px;font-size:6.1px;line-height:7.32px;color:#56795f;opacity:.6;">-</span>
<span style="left:425.47px;top:299.07px;font-size:6.1px;line-height:7.32px;color:#56795f;opacity:.6;">-</span>
<span style="left:469.17px;top:299.07px;font-size:6.1px;line-height:7.32px;color:#56795f;opacity:.3;">-</span>
<span style="left:512.87px;top:299.07px;font-size:6.1px;line-height:7.32px;color:#56795f;opacity:.3;">-</span>
<span style="left:556.57px;top:299.07px;font-size:6.1px;line-height:7.32px;color:#56795f;opacity:.3;">-</span>
<span style="left:600.27px;top:299.07px;font-size:6.1px;line-height:7.32px;color:#56795f;opacity:.3;">-</span>
<span style="left:643.97px;top:299.07px;font-size:6.1px;line-height:7.32px;color:#56795f;opacity:.3;">-</span>
<span style="left:687.67px;top:299.07px;font-size:6.1px;line-height:7.32px;color:#56795f;opacity:.6;">-</span>
<span style="left:731.37px;top:299.07px;font-size:6.1px;line-height:7.32px;color:#56795f;opacity:.6;">-</span>
<span style="left:775.07px;top:299.07px;font-size:6.1px;line-height:7.32px;color:#56795f;opacity:.6;">-</span>
<span style="left:818.77px;top:299.07px;font-size:6.1px;line-height:7.32px;color:#56795f;opacity:.6;">-</span>
<span style="left:862.47px;top:299.07px;font-size:6.1px;line-height:7.32px;color:#56795f;opacity:.6;">-</span>
<span style="left:906.17px;top:299.07px;font-size:6.1px;line-height:7.32px;color:#56795f;opacity:.3;">-</span>
<span style="left:947.77px;top:299.07px;font-size:6.1px;line-height:7.32px;color:#56795f;opacity:.3;">-</span>
<span style="left:989.77px;top:299.07px;font-size:6.1px;line-height:7.32px;color:#56795f;opacity:.3;">-</span>
<span style="left:41.00px;top:311.60px;font-size:6.1px;line-height:7.32px;color:#56795f;transform:scaleX(1.016);transform-origin:left center;">HR Placeholder 16</span>
<span style="left:128.34px;top:311.60px;font-size:6.1px;line-height:7.32px;color:#56795f;transform:scaleX(0.967);transform-origin:center center;">Feb-25</span>
<span style="left:186.47px;top:311.60px;font-size:6.1px;line-height:7.32px;color:#56795f;opacity:.55;">-</span>
<span style="left:250.67px;top:311.60px;font-size:6.1px;line-height:7.32px;color:#56795f;opacity:.6;">-</span>
<span style="left:294.37px;top:311.60px;font-size:6.1px;line-height:7.32px;color:#56795f;opacity:.6;">-</span>
<span style="left:338.07px;top:311.60px;font-size:6.1px;line-height:7.32px;color:#56795f;opacity:.6;">-</span>
<span style="left:381.77px;top:311.60px;font-size:6.1px;line-height:7.32px;color:#56795f;opacity:.6;">-</span>
<span style="left:425.47px;top:311.60px;font-size:6.1px;line-height:7.32px;color:#56795f;opacity:.6;">-</span>
<span style="left:469.17px;top:311.60px;font-size:6.1px;line-height:7.32px;color:#56795f;opacity:.3;">-</span>
<span style="left:512.87px;top:311.60px;font-size:6.1px;line-height:7.32px;color:#56795f;opacity:.3;">-</span>
<span style="left:556.57px;top:311.60px;font-size:6.1px;line-height:7.32px;color:#56795f;opacity:.3;">-</span>
<span style="left:600.27px;top:311.60px;font-size:6.1px;line-height:7.32px;color:#56795f;opacity:.3;">-</span>
<span style="left:643.97px;top:311.60px;font-size:6.1px;line-height:7.32px;color:#56795f;opacity:.3;">-</span>
<span style="left:687.67px;top:311.60px;font-size:6.1px;line-height:7.32px;color:#56795f;opacity:.6;">-</span>
<span style="left:731.37px;top:311.60px;font-size:6.1px;line-height:7.32px;color:#56795f;opacity:.6;">-</span>
<span style="left:775.07px;top:311.60px;font-size:6.1px;line-height:7.32px;color:#56795f;opacity:.6;">-</span>
<span style="left:818.77px;top:311.60px;font-size:6.1px;line-height:7.32px;color:#56795f;opacity:.6;">-</span>
<span style="left:862.47px;top:311.60px;font-size:6.1px;line-height:7.32px;color:#56795f;opacity:.6;">-</span>
<span style="left:906.17px;top:311.60px;font-size:6.1px;line-height:7.32px;color:#56795f;opacity:.3;">-</span>
<span style="left:947.77px;top:311.60px;font-size:6.1px;line-height:7.32px;color:#56795f;opacity:.3;">-</span>
<span style="left:989.77px;top:311.60px;font-size:6.1px;line-height:7.32px;color:#56795f;opacity:.3;">-</span>
<span style="left:41.00px;top:324.13px;font-size:6.1px;line-height:7.32px;color:#56795f;transform:scaleX(1.016);transform-origin:left center;">HR Placeholder 17</span>
<span style="left:128.34px;top:324.13px;font-size:6.1px;line-height:7.32px;color:#56795f;transform:scaleX(0.967);transform-origin:center center;">Feb-25</span>
<span style="left:186.47px;top:324.13px;font-size:6.1px;line-height:7.32px;color:#56795f;opacity:.55;">-</span>
<span style="left:250.67px;top:324.13px;font-size:6.1px;line-height:7.32px;color:#56795f;opacity:.6;">-</span>
<span style="left:294.37px;top:324.13px;font-size:6.1px;line-height:7.32px;color:#56795f;opacity:.6;">-</span>
<span style="left:338.07px;top:324.13px;font-size:6.1px;line-height:7.32px;color:#56795f;opacity:.6;">-</span>
<span style="left:381.77px;top:324.13px;font-size:6.1px;line-height:7.32px;color:#56795f;opacity:.6;">-</span>
<span style="left:425.47px;top:324.13px;font-size:6.1px;line-height:7.32px;color:#56795f;opacity:.6;">-</span>
<span style="left:469.17px;top:324.13px;font-size:6.1px;line-height:7.32px;color:#56795f;opacity:.3;">-</span>
<span style="left:512.87px;top:324.13px;font-size:6.1px;line-height:7.32px;color:#56795f;opacity:.3;">-</span>
<span style="left:556.57px;top:324.13px;font-size:6.1px;line-height:7.32px;color:#56795f;opacity:.3;">-</span>
<span style="left:600.27px;top:324.13px;font-size:6.1px;line-height:7.32px;color:#56795f;opacity:.3;">-</span>
<span style="left:643.97px;top:324.13px;font-size:6.1px;line-height:7.32px;color:#56795f;opacity:.3;">-</span>
<span style="left:687.67px;top:324.13px;font-size:6.1px;line-height:7.32px;color:#56795f;opacity:.6;">-</span>
<span style="left:731.37px;top:324.13px;font-size:6.1px;line-height:7.32px;color:#56795f;opacity:.6;">-</span>
<span style="left:775.07px;top:324.13px;font-size:6.1px;line-height:7.32px;color:#56795f;opacity:.6;">-</span>
<span style="left:818.77px;top:324.13px;font-size:6.1px;line-height:7.32px;color:#56795f;opacity:.6;">-</span>
<span style="left:862.47px;top:324.13px;font-size:6.1px;line-height:7.32px;color:#56795f;opacity:.6;">-</span>
<span style="left:906.17px;top:324.13px;font-size:6.1px;line-height:7.32px;color:#56795f;opacity:.3;">-</span>
<span style="left:947.77px;top:324.13px;font-size:6.1px;line-height:7.32px;color:#56795f;opacity:.3;">-</span>
<span style="left:989.77px;top:324.13px;font-size:6.1px;line-height:7.32px;color:#56795f;opacity:.3;">-</span>
<span style="left:41.00px;top:336.67px;font-size:6.1px;line-height:7.32px;color:#56795f;transform:scaleX(1.016);transform-origin:left center;">HR Placeholder 18</span>
<span style="left:128.34px;top:336.67px;font-size:6.1px;line-height:7.32px;color:#56795f;transform:scaleX(0.967);transform-origin:center center;">Feb-25</span>
<span style="left:186.47px;top:336.67px;font-size:6.1px;line-height:7.32px;color:#56795f;opacity:.55;">-</span>
<span style="left:250.67px;top:336.67px;font-size:6.1px;line-height:7.32px;color:#56795f;opacity:.6;">-</span>
<span style="left:294.37px;top:336.67px;font-size:6.1px;line-height:7.32px;color:#56795f;opacity:.6;">-</span>
<span style="left:338.07px;top:336.67px;font-size:6.1px;line-height:7.32px;color:#56795f;opacity:.6;">-</span>
<span style="left:381.77px;top:336.67px;font-size:6.1px;line-height:7.32px;color:#56795f;opacity:.6;">-</span>
<span style="left:425.47px;top:336.67px;font-size:6.1px;line-height:7.32px;color:#56795f;opacity:.6;">-</span>
<span style="left:469.17px;top:336.67px;font-size:6.1px;line-height:7.32px;color:#56795f;opacity:.3;">-</span>
<span style="left:512.87px;top:336.67px;font-size:6.1px;line-height:7.32px;color:#56795f;opacity:.3;">-</span>
<span style="left:556.57px;top:336.67px;font-size:6.1px;line-height:7.32px;color:#56795f;opacity:.3;">-</span>
<span style="left:600.27px;top:336.67px;font-size:6.1px;line-height:7.32px;color:#56795f;opacity:.3;">-</span>
<span style="left:643.97px;top:336.67px;font-size:6.1px;line-height:7.32px;color:#56795f;opacity:.3;">-</span>
<span style="left:687.67px;top:336.67px;font-size:6.1px;line-height:7.32px;color:#56795f;opacity:.6;">-</span>
<span style="left:731.37px;top:336.67px;font-size:6.1px;line-height:7.32px;color:#56795f;opacity:.6;">-</span>
<span style="left:775.07px;top:336.67px;font-size:6.1px;line-height:7.32px;color:#56795f;opacity:.6;">-</span>
<span style="left:818.77px;top:336.67px;font-size:6.1px;line-height:7.32px;color:#56795f;opacity:.6;">-</span>
<span style="left:862.47px;top:336.67px;font-size:6.1px;line-height:7.32px;color:#56795f;opacity:.6;">-</span>
<span style="left:906.17px;top:336.67px;font-size:6.1px;line-height:7.32px;color:#56795f;opacity:.3;">-</span>
<span style="left:947.77px;top:336.67px;font-size:6.1px;line-height:7.32px;color:#56795f;opacity:.3;">-</span>
<span style="left:989.77px;top:336.67px;font-size:6.1px;line-height:7.32px;color:#56795f;opacity:.3;">-</span>
<span style="left:231.05px;top:349.32px;font-size:6.3px;line-height:7.56px;color:#286cb4;font-weight:bold;">33</span>
<svg style="left:212.70px;top:346px" width="4" height="4"><path d="M0 0H4L0 4Z" fill="#1d5e38"/></svg>
<span style="left:274.75px;top:349.32px;font-size:6.3px;line-height:7.56px;color:#286cb4;font-weight:bold;">34</span>
<svg style="left:256.40px;top:346px" width="4" height="4"><path d="M0 0H4L0 4Z" fill="#1d5e38"/></svg>
<span style="left:318.45px;top:349.32px;font-size:6.3px;line-height:7.56px;color:#286cb4;font-weight:bold;">34</span>
<svg style="left:300.10px;top:346px" width="4" height="4"><path d="M0 0H4L0 4Z" fill="#1d5e38"/></svg>
<span style="left:362.15px;top:349.32px;font-size:6.3px;line-height:7.56px;color:#286cb4;font-weight:bold;">34</span>
<svg style="left:343.80px;top:346px" width="4" height="4"><path d="M0 0H4L0 4Z" fill="#1d5e38"/></svg>
<span style="left:405.85px;top:349.32px;font-size:6.3px;line-height:7.56px;color:#286cb4;font-weight:bold;">34</span>
<svg style="left:387.50px;top:346px" width="4" height="4"><path d="M0 0H4L0 4Z" fill="#1d5e38"/></svg>
<span style="left:42.50px;top:421.39px;font-size:6.1px;line-height:7.32px;color:#56795f;transform:scaleX(1.014);transform-origin:left center;">HR Placeholder 1</span>
<span style="left:42.50px;top:433.89px;font-size:6.1px;line-height:7.32px;color:#56795f;transform:scaleX(1.014);transform-origin:left center;">HR Placeholder 2</span>
<span style="left:42.50px;top:446.39px;font-size:6.1px;line-height:7.32px;color:#56795f;transform:scaleX(1.014);transform-origin:left center;">HR Placeholder 3</span>
<span style="left:42.50px;top:458.89px;font-size:6.1px;line-height:7.32px;color:#56795f;transform:scaleX(1.014);transform-origin:left center;">HR Placeholder 4</span>
<span style="left:42.50px;top:471.39px;font-size:6.1px;line-height:7.32px;color:#56795f;transform:scaleX(1.014);transform-origin:left center;">HR Placeholder 5</span>
<span style="left:42.50px;top:483.89px;font-size:6.1px;line-height:7.32px;color:#56795f;transform:scaleX(1.014);transform-origin:left center;">HR Placeholder 6</span>
<span style="left:42.50px;top:496.39px;font-size:6.1px;line-height:7.32px;color:#56795f;transform:scaleX(1.014);transform-origin:left center;">HR Placeholder 7</span>
<span style="left:42.50px;top:508.89px;font-size:6.1px;line-height:7.32px;color:#56795f;transform:scaleX(1.014);transform-origin:left center;">HR Placeholder 8</span>
<span style="left:42.50px;top:521.39px;font-size:6.1px;line-height:7.32px;color:#56795f;transform:scaleX(1.014);transform-origin:left center;">HR Placeholder 9</span>
<span style="left:42.50px;top:533.89px;font-size:6.1px;line-height:7.32px;color:#56795f;transform:scaleX(1.016);transform-origin:left center;">HR Placeholder 10</span>
<span style="left:42.50px;top:546.39px;font-size:6.1px;line-height:7.32px;color:#56795f;transform:scaleX(1.025);transform-origin:left center;">HR Placeholder 11</span>
<span style="left:42.50px;top:558.89px;font-size:6.1px;line-height:7.32px;color:#56795f;transform:scaleX(1.016);transform-origin:left center;">HR Placeholder 12</span>
<span style="left:232.08px;top:421.39px;font-size:6.1px;line-height:7.32px;color:#2568ab;transform:scaleX(1.039);transform-origin:right center;">(35,000)</span>
<span style="left:275.78px;top:421.39px;font-size:6.1px;line-height:7.32px;color:#2568ab;transform:scaleX(1.039);transform-origin:right center;">(36,750)</span>
<span style="left:319.48px;top:421.39px;font-size:6.1px;line-height:7.32px;color:#2568ab;transform:scaleX(1.039);transform-origin:right center;">(38,588)</span>
<span style="left:363.18px;top:421.39px;font-size:6.1px;line-height:7.32px;color:#2568ab;transform:scaleX(1.039);transform-origin:right center;">(40,517)</span>
<span style="left:406.88px;top:421.39px;font-size:6.1px;line-height:7.32px;color:#2568ab;transform:scaleX(1.039);transform-origin:right center;">(42,543)</span>
<span style="left:450.58px;top:421.39px;font-size:6.1px;line-height:7.32px;color:#2568ab;transform:scaleX(1.039);transform-origin:right center;">(44,670)</span>
<span style="left:494.28px;top:421.39px;font-size:6.1px;line-height:7.32px;color:#2568ab;transform:scaleX(1.039);transform-origin:right center;">(46,903)</span>
<span style="left:537.98px;top:421.39px;font-size:6.1px;line-height:7.32px;color:#2568ab;transform:scaleX(1.039);transform-origin:right center;">(49,248)</span>
<span style="left:582.13px;top:421.39px;font-size:6.1px;line-height:7.32px;color:#2568ab;transform:scaleX(1.060);transform-origin:right center;">(51,711)</span>
<span style="left:625.38px;top:421.39px;font-size:6.1px;line-height:7.32px;color:#2568ab;transform:scaleX(1.039);transform-origin:right center;">(54,296)</span>
<span style="left:669.08px;top:421.39px;font-size:6.1px;line-height:7.32px;color:#2568ab;transform:scaleX(1.039);transform-origin:right center;">(54,296)</span>
<span style="left:712.78px;top:421.39px;font-size:6.1px;line-height:7.32px;color:#2568ab;transform:scaleX(1.039);transform-origin:right center;">(55,382)</span>
<span style="left:756.48px;top:421.39px;font-size:6.1px;line-height:7.32px;color:#2568ab;transform:scaleX(1.039);transform-origin:right center;">(57,597)</span>
<span style="left:800.18px;top:421.39px;font-size:6.1px;line-height:7.32px;color:#2568ab;transform:scaleX(1.039);transform-origin:right center;">(60,921)</span>
<span style="left:843.88px;top:421.39px;font-size:6.1px;line-height:7.32px;color:#2568ab;transform:scaleX(1.039);transform-origin:right center;">(60,921)</span>
<span style="left:887.58px;top:421.39px;font-size:6.1px;line-height:7.32px;color:#2568ab;transform:scaleX(1.039);transform-origin:right center;">(60,921)</span>
<span style="left:929.18px;top:421.39px;font-size:6.1px;line-height:7.32px;color:#2568ab;transform:scaleX(1.039);transform-origin:right center;">(60,921)</span>
<span style="left:971.18px;top:421.39px;font-size:6.1px;line-height:7.32px;color:#2568ab;transform:scaleX(1.039);transform-origin:right center;">(60,921)</span>
<span style="left:232.08px;top:433.89px;font-size:6.1px;line-height:7.32px;color:#2568ab;transform:scaleX(1.039);transform-origin:right center;">(50,000)</span>
<span style="left:275.78px;top:433.89px;font-size:6.1px;line-height:7.32px;color:#2568ab;transform:scaleX(1.039);transform-origin:right center;">(50,500)</span>
<span style="left:319.48px;top:433.89px;font-size:6.1px;line-height:7.32px;color:#2568ab;transform:scaleX(1.039);transform-origin:right center;">(51,005)</span>
<span style="left:363.18px;top:433.89px;font-size:6.1px;line-height:7.32px;color:#2568ab;transform:scaleX(1.039);transform-origin:right center;">(51,515)</span>
<span style="left:406.88px;top:433.89px;font-size:6.1px;line-height:7.32px;color:#2568ab;transform:scaleX(1.039);transform-origin:right center;">(52,030)</span>
<span style="left:450.58px;top:433.89px;font-size:6.1px;line-height:7.32px;color:#2568ab;transform:scaleX(1.039);transform-origin:right center;">(54,632)</span>
<span style="left:494.28px;top:433.89px;font-size:6.1px;line-height:7.32px;color:#2568ab;transform:scaleX(1.039);transform-origin:right center;">(55,178)</span>
<span style="left:537.98px;top:433.89px;font-size:6.1px;line-height:7.32px;color:#2568ab;transform:scaleX(1.039);transform-origin:right center;">(55,730)</span>
<span style="left:581.68px;top:433.89px;font-size:6.1px;line-height:7.32px;color:#2568ab;transform:scaleX(1.039);transform-origin:right center;">(56,287)</span>
<span style="left:625.38px;top:433.89px;font-size:6.1px;line-height:7.32px;color:#2568ab;transform:scaleX(1.039);transform-origin:right center;">(56,850)</span>
<span style="left:669.08px;top:433.89px;font-size:6.1px;line-height:7.32px;color:#2568ab;transform:scaleX(1.039);transform-origin:right center;">(56,850)</span>
<span style="left:712.78px;top:433.89px;font-size:6.1px;line-height:7.32px;color:#2568ab;transform:scaleX(1.039);transform-origin:right center;">(57,987)</span>
<span style="left:756.48px;top:433.89px;font-size:6.1px;line-height:7.32px;color:#2568ab;transform:scaleX(1.039);transform-origin:right center;">(57,987)</span>
<span style="left:800.18px;top:433.89px;font-size:6.1px;line-height:7.32px;color:#2568ab;transform:scaleX(1.039);transform-origin:right center;">(61,786)</span>
<span style="left:843.88px;top:433.89px;font-size:6.1px;line-height:7.32px;color:#2568ab;transform:scaleX(1.039);transform-origin:right center;">(63,786)</span>
<span style="left:887.58px;top:433.89px;font-size:6.1px;line-height:7.32px;color:#2568ab;transform:scaleX(1.039);transform-origin:right center;">(63,786)</span>
<span style="left:929.18px;top:433.89px;font-size:6.1px;line-height:7.32px;color:#2568ab;transform:scaleX(1.039);transform-origin:right center;">(63,786)</span>
<span style="left:971.18px;top:433.89px;font-size:6.1px;line-height:7.32px;color:#2568ab;transform:scaleX(1.039);transform-origin:right center;">(63,786)</span>
<span style="left:232.08px;top:446.39px;font-size:6.1px;line-height:7.32px;color:#2568ab;transform:scaleX(1.039);transform-origin:right center;">(35,000)</span>
<span style="left:275.78px;top:446.39px;font-size:6.1px;line-height:7.32px;color:#2568ab;transform:scaleX(1.039);transform-origin:right center;">(35,350)</span>
<span style="left:319.48px;top:446.39px;font-size:6.1px;line-height:7.32px;color:#2568ab;transform:scaleX(1.039);transform-origin:right center;">(35,704)</span>
<span style="left:363.18px;top:446.39px;font-size:6.1px;line-height:7.32px;color:#2568ab;transform:scaleX(1.039);transform-origin:right center;">(36,061)</span>
<span style="left:406.88px;top:446.39px;font-size:6.1px;line-height:7.32px;color:#2568ab;transform:scaleX(1.039);transform-origin:right center;">(36,421)</span>
<span style="left:450.58px;top:446.39px;font-size:6.1px;line-height:7.32px;color:#2568ab;transform:scaleX(1.039);transform-origin:right center;">(38,242)</span>
<span style="left:494.28px;top:446.39px;font-size:6.1px;line-height:7.32px;color:#2568ab;transform:scaleX(1.039);transform-origin:right center;">(38,625)</span>
<span style="left:538.43px;top:446.39px;font-size:6.1px;line-height:7.32px;color:#2568ab;transform:scaleX(1.060);transform-origin:right center;">(39,011)</span>
<span style="left:581.68px;top:446.39px;font-size:6.1px;line-height:7.32px;color:#2568ab;transform:scaleX(1.039);transform-origin:right center;">(39,401)</span>
<span style="left:625.38px;top:446.39px;font-size:6.1px;line-height:7.32px;color:#2568ab;transform:scaleX(1.039);transform-origin:right center;">(39,795)</span>
<span style="left:669.08px;top:446.39px;font-size:6.1px;line-height:7.32px;color:#2568ab;transform:scaleX(1.039);transform-origin:right center;">(39,795)</span>
<span style="left:712.78px;top:446.39px;font-size:6.1px;line-height:7.32px;color:#2568ab;transform:scaleX(1.039);transform-origin:right center;">(40,591)</span>
<span style="left:756.48px;top:446.39px;font-size:6.1px;line-height:7.32px;color:#2568ab;transform:scaleX(1.039);transform-origin:right center;">(40,591)</span>
<span style="left:800.18px;top:446.39px;font-size:6.1px;line-height:7.32px;color:#2568ab;transform:scaleX(1.039);transform-origin:right center;">(44,650)</span>
<span style="left:843.88px;top:446.39px;font-size:6.1px;line-height:7.32px;color:#2568ab;transform:scaleX(1.039);transform-origin:right center;">(44,650)</span>
<span style="left:887.58px;top:446.39px;font-size:6.1px;line-height:7.32px;color:#2568ab;transform:scaleX(1.039);transform-origin:right center;">(44,650)</span>
<span style="left:929.18px;top:446.39px;font-size:6.1px;line-height:7.32px;color:#2568ab;transform:scaleX(1.039);transform-origin:right center;">(44,650)</span>
<span style="left:971.18px;top:446.39px;font-size:6.1px;line-height:7.32px;color:#2568ab;transform:scaleX(1.039);transform-origin:right center;">(44,650)</span>
<span style="left:232.08px;top:458.89px;font-size:6.1px;line-height:7.32px;color:#2568ab;transform:scaleX(1.039);transform-origin:right center;">(50,000)</span>
<span style="left:275.78px;top:458.89px;font-size:6.1px;line-height:7.32px;color:#2568ab;transform:scaleX(1.039);transform-origin:right center;">(50,500)</span>
<span style="left:319.48px;top:458.89px;font-size:6.1px;line-height:7.32px;color:#2568ab;transform:scaleX(1.039);transform-origin:right center;">(51,005)</span>
<span style="left:363.18px;top:458.89px;font-size:6.1px;line-height:7.32px;color:#2568ab;transform:scaleX(1.039);transform-origin:right center;">(51,515)</span>
<span style="left:406.88px;top:458.89px;font-size:6.1px;line-height:7.32px;color:#2568ab;transform:scaleX(1.039);transform-origin:right center;">(52,030)</span>
<span style="left:450.58px;top:458.89px;font-size:6.1px;line-height:7.32px;color:#2568ab;transform:scaleX(1.039);transform-origin:right center;">(54,632)</span>
<span style="left:494.28px;top:458.89px;font-size:6.1px;line-height:7.32px;color:#2568ab;transform:scaleX(1.039);transform-origin:right center;">(55,178)</span>
<span style="left:537.98px;top:458.89px;font-size:6.1px;line-height:7.32px;color:#2568ab;transform:scaleX(1.039);transform-origin:right center;">(55,730)</span>
<span style="left:581.68px;top:458.89px;font-size:6.1px;line-height:7.32px;color:#2568ab;transform:scaleX(1.039);transform-origin:right center;">(56,287)</span>
<span style="left:625.38px;top:458.89px;font-size:6.1px;line-height:7.32px;color:#2568ab;transform:scaleX(1.039);transform-origin:right center;">(56,850)</span>
<span style="left:669.08px;top:458.89px;font-size:6.1px;line-height:7.32px;color:#2568ab;transform:scaleX(1.039);transform-origin:right center;">(56,850)</span>
<span style="left:712.78px;top:458.89px;font-size:6.1px;line-height:7.32px;color:#2568ab;transform:scaleX(1.039);transform-origin:right center;">(57,987)</span>
<span style="left:756.48px;top:458.89px;font-size:6.1px;line-height:7.32px;color:#2568ab;transform:scaleX(1.039);transform-origin:right center;">(57,987)</span>
<span style="left:800.18px;top:458.89px;font-size:6.1px;line-height:7.32px;color:#2568ab;transform:scaleX(1.039);transform-origin:right center;">(63,786)</span>
<span style="left:843.88px;top:458.89px;font-size:6.1px;line-height:7.32px;color:#2568ab;transform:scaleX(1.039);transform-origin:right center;">(63,786)</span>
<span style="left:887.58px;top:458.89px;font-size:6.1px;line-height:7.32px;color:#2568ab;transform:scaleX(1.039);transform-origin:right center;">(63,786)</span>
<span style="left:929.18px;top:458.89px;font-size:6.1px;line-height:7.32px;color:#2568ab;transform:scaleX(1.039);transform-origin:right center;">(63,786)</span>
<span style="left:971.18px;top:458.89px;font-size:6.1px;line-height:7.32px;color:#2568ab;transform:scaleX(1.039);transform-origin:right center;">(63,786)</span>
<span style="left:232.08px;top:471.39px;font-size:6.1px;line-height:7.32px;color:#2568ab;transform:scaleX(1.039);transform-origin:right center;">(70,000)</span>
<span style="left:275.78px;top:471.39px;font-size:6.1px;line-height:7.32px;color:#2568ab;transform:scaleX(1.039);transform-origin:right center;">(70,700)</span>
<span style="left:319.48px;top:471.39px;font-size:6.1px;line-height:7.32px;color:#2568ab;transform:scaleX(1.039);transform-origin:right center;">(71,407)</span>
<span style="left:363.18px;top:471.39px;font-size:6.1px;line-height:7.32px;color:#2568ab;transform:scaleX(1.039);transform-origin:right center;">(72,121)</span>
<span style="left:406.88px;top:471.39px;font-size:6.1px;line-height:7.32px;color:#2568ab;transform:scaleX(1.039);transform-origin:right center;">(72,842)</span>
<span style="left:450.58px;top:471.39px;font-size:6.1px;line-height:7.32px;color:#2568ab;transform:scaleX(1.039);transform-origin:right center;">(76,484)</span>
<span style="left:494.28px;top:471.39px;font-size:6.1px;line-height:7.32px;color:#2568ab;transform:scaleX(1.039);transform-origin:right center;">(77,249)</span>
<span style="left:537.98px;top:471.39px;font-size:6.1px;line-height:7.32px;color:#2568ab;transform:scaleX(1.039);transform-origin:right center;">(78,022)</span>
<span style="left:581.68px;top:471.39px;font-size:6.1px;line-height:7.32px;color:#2568ab;transform:scaleX(1.039);transform-origin:right center;">(78,802)</span>
<span style="left:625.38px;top:471.39px;font-size:6.1px;line-height:7.32px;color:#2568ab;transform:scaleX(1.039);transform-origin:right center;">(79,590)</span>
<span style="left:669.08px;top:471.39px;font-size:6.1px;line-height:7.32px;color:#2568ab;transform:scaleX(1.039);transform-origin:right center;">(79,590)</span>
<span style="left:712.78px;top:471.39px;font-size:6.1px;line-height:7.32px;color:#2568ab;transform:scaleX(1.039);transform-origin:right center;">(81,182)</span>
<span style="left:756.48px;top:471.39px;font-size:6.1px;line-height:7.32px;color:#2568ab;transform:scaleX(1.039);transform-origin:right center;">(81,182)</span>
<span style="left:800.18px;top:471.39px;font-size:6.1px;line-height:7.32px;color:#2568ab;transform:scaleX(1.039);transform-origin:right center;">(89,300)</span>
<span style="left:843.88px;top:471.39px;font-size:6.1px;line-height:7.32px;color:#2568ab;transform:scaleX(1.039);transform-origin:right center;">(89,300)</span>
<span style="left:887.58px;top:471.39px;font-size:6.1px;line-height:7.32px;color:#2568ab;transform:scaleX(1.039);transform-origin:right center;">(89,300)</span>
<span style="left:929.18px;top:471.39px;font-size:6.1px;line-height:7.32px;color:#2568ab;transform:scaleX(1.039);transform-origin:right center;">(89,300)</span>
<span style="left:971.18px;top:471.39px;font-size:6.1px;line-height:7.32px;color:#2568ab;transform:scaleX(1.039);transform-origin:right center;">(89,300)</span>
<span style="left:232.08px;top:483.89px;font-size:6.1px;line-height:7.32px;color:#2568ab;transform:scaleX(1.039);transform-origin:right center;">(35,000)</span>
<span style="left:275.78px;top:483.89px;font-size:6.1px;line-height:7.32px;color:#2568ab;transform:scaleX(1.039);transform-origin:right center;">(35,350)</span>
<span style="left:319.48px;top:483.89px;font-size:6.1px;line-height:7.32px;color:#2568ab;transform:scaleX(1.039);transform-origin:right center;">(35,704)</span>
<span style="left:363.18px;top:483.89px;font-size:6.1px;line-height:7.32px;color:#2568ab;transform:scaleX(1.039);transform-origin:right center;">(36,061)</span>
<span style="left:406.88px;top:483.89px;font-size:6.1px;line-height:7.32px;color:#2568ab;transform:scaleX(1.039);transform-origin:right center;">(36,421)</span>
<span style="left:450.58px;top:483.89px;font-size:6.1px;line-height:7.32px;color:#2568ab;transform:scaleX(1.039);transform-origin:right center;">(38,242)</span>
<span style="left:494.28px;top:483.89px;font-size:6.1px;line-height:7.32px;color:#2568ab;transform:scaleX(1.039);transform-origin:right center;">(38,625)</span>
<span style="left:538.43px;top:483.89px;font-size:6.1px;line-height:7.32px;color:#2568ab;transform:scaleX(1.060);transform-origin:right center;">(39,011)</span>
<span style="left:581.68px;top:483.89px;font-size:6.1px;line-height:7.32px;color:#2568ab;transform:scaleX(1.039);transform-origin:right center;">(39,401)</span>
<span style="left:625.38px;top:483.89px;font-size:6.1px;line-height:7.32px;color:#2568ab;transform:scaleX(1.039);transform-origin:right center;">(39,795)</span>
<span style="left:669.08px;top:483.89px;font-size:6.1px;line-height:7.32px;color:#2568ab;transform:scaleX(1.039);transform-origin:right center;">(39,795)</span>
<span style="left:712.78px;top:483.89px;font-size:6.1px;line-height:7.32px;color:#2568ab;transform:scaleX(1.039);transform-origin:right center;">(40,591)</span>
<span style="left:756.48px;top:483.89px;font-size:6.1px;line-height:7.32px;color:#2568ab;transform:scaleX(1.039);transform-origin:right center;">(40,591)</span>
<span style="left:800.18px;top:483.89px;font-size:6.1px;line-height:7.32px;color:#2568ab;transform:scaleX(1.039);transform-origin:right center;">(44,650)</span>
<span style="left:843.88px;top:483.89px;font-size:6.1px;line-height:7.32px;color:#2568ab;transform:scaleX(1.039);transform-origin:right center;">(44,650)</span>
<span style="left:887.58px;top:483.89px;font-size:6.1px;line-height:7.32px;color:#2568ab;transform:scaleX(1.039);transform-origin:right center;">(44,650)</span>
<span style="left:929.18px;top:483.89px;font-size:6.1px;line-height:7.32px;color:#2568ab;transform:scaleX(1.039);transform-origin:right center;">(44,650)</span>
<span style="left:971.18px;top:483.89px;font-size:6.1px;line-height:7.32px;color:#2568ab;transform:scaleX(1.039);transform-origin:right center;">(44,650)</span>
<span style="left:250.77px;top:496.39px;font-size:6.1px;line-height:7.32px;color:#777;opacity:.5;">-</span>
<span style="left:294.47px;top:496.39px;font-size:6.1px;line-height:7.32px;color:#777;opacity:.5;">-</span>
<span style="left:338.17px;top:496.39px;font-size:6.1px;line-height:7.32px;color:#777;opacity:.5;">-</span>
<span style="left:381.87px;top:496.39px;font-size:6.1px;line-height:7.32px;color:#777;opacity:.5;">-</span>
<span style="left:425.57px;top:496.39px;font-size:6.1px;line-height:7.32px;color:#777;opacity:.5;">-</span>
<span style="left:469.27px;top:496.39px;font-size:6.1px;line-height:7.32px;color:#777;opacity:.5;">-</span>
<span style="left:512.97px;top:496.39px;font-size:6.1px;line-height:7.32px;color:#777;opacity:.5;">-</span>
<span style="left:556.67px;top:496.39px;font-size:6.1px;line-height:7.32px;color:#777;opacity:.5;">-</span>
<span style="left:600.37px;top:496.39px;font-size:6.1px;line-height:7.32px;color:#777;opacity:.5;">-</span>
<span style="left:644.07px;top:496.39px;font-size:6.1px;line-height:7.32px;color:#777;opacity:.5;">-</span>
<span style="left:687.77px;top:496.39px;font-size:6.1px;line-height:7.32px;color:#777;opacity:.5;">-</span>
<span style="left:731.47px;top:496.39px;font-size:6.1px;line-height:7.32px;color:#777;opacity:.5;">-</span>
<span style="left:775.17px;top:496.39px;font-size:6.1px;line-height:7.32px;color:#777;opacity:.5;">-</span>
<span style="left:818.87px;top:496.39px;font-size:6.1px;line-height:7.32px;color:#777;opacity:.5;">-</span>
<span style="left:862.57px;top:496.39px;font-size:6.1px;line-height:7.32px;color:#777;opacity:.5;">-</span>
<span style="left:906.27px;top:496.39px;font-size:6.1px;line-height:7.32px;color:#777;opacity:.5;">-</span>
<span style="left:947.87px;top:496.39px;font-size:6.1px;line-height:7.32px;color:#777;opacity:.5;">-</span>
<span style="left:989.87px;top:496.39px;font-size:6.1px;line-height:7.32px;color:#777;opacity:.5;">-</span>
<span style="left:250.77px;top:508.89px;font-size:6.1px;line-height:7.32px;color:#777;opacity:.5;">-</span>
<span style="left:294.47px;top:508.89px;font-size:6.1px;line-height:7.32px;color:#777;opacity:.5;">-</span>
<span style="left:338.17px;top:508.89px;font-size:6.1px;line-height:7.32px;color:#777;opacity:.5;">-</span>
<span style="left:381.87px;top:508.89px;font-size:6.1px;line-height:7.32px;color:#777;opacity:.5;">-</span>
<span style="left:425.57px;top:508.89px;font-size:6.1px;line-height:7.32px;color:#777;opacity:.5;">-</span>
<span style="left:469.27px;top:508.89px;font-size:6.1px;line-height:7.32px;color:#777;opacity:.5;">-</span>
<span style="left:512.97px;top:508.89px;font-size:6.1px;line-height:7.32px;color:#777;opacity:.5;">-</span>
<span style="left:556.67px;top:508.89px;font-size:6.1px;line-height:7.32px;color:#777;opacity:.5;">-</span>
<span style="left:600.37px;top:508.89px;font-size:6.1px;line-height:7.32px;color:#777;opacity:.5;">-</span>
<span style="left:644.07px;top:508.89px;font-size:6.1px;line-height:7.32px;color:#777;opacity:.5;">-</span>
<span style="left:687.77px;top:508.89px;font-size:6.1px;line-height:7.32px;color:#777;opacity:.5;">-</span>
<span style="left:731.47px;top:508.89px;font-size:6.1px;line-height:7.32px;color:#777;opacity:.5;">-</span>
<span style="left:775.17px;top:508.89px;font-size:6.1px;line-height:7.32px;color:#777;opacity:.5;">-</span>
<span style="left:818.87px;top:508.89px;font-size:6.1px;line-height:7.32px;color:#777;opacity:.5;">-</span>
<span style="left:862.57px;top:508.89px;font-size:6.1px;line-height:7.32px;color:#777;opacity:.5;">-</span>
<span style="left:906.27px;top:508.89px;font-size:6.1px;line-height:7.32px;color:#777;opacity:.5;">-</span>
<span style="left:947.87px;top:508.89px;font-size:6.1px;line-height:7.32px;color:#777;opacity:.5;">-</span>
<span style="left:989.87px;top:508.89px;font-size:6.1px;line-height:7.32px;color:#777;opacity:.5;">-</span>
<span style="left:250.77px;top:521.39px;font-size:6.1px;line-height:7.32px;color:#777;opacity:.5;">-</span>
<span style="left:294.47px;top:521.39px;font-size:6.1px;line-height:7.32px;color:#777;opacity:.5;">-</span>
<span style="left:338.17px;top:521.39px;font-size:6.1px;line-height:7.32px;color:#777;opacity:.5;">-</span>
<span style="left:381.87px;top:521.39px;font-size:6.1px;line-height:7.32px;color:#777;opacity:.5;">-</span>
<span style="left:425.57px;top:521.39px;font-size:6.1px;line-height:7.32px;color:#777;opacity:.5;">-</span>
<span style="left:469.27px;top:521.39px;font-size:6.1px;line-height:7.32px;color:#777;opacity:.5;">-</span>
<span style="left:512.97px;top:521.39px;font-size:6.1px;line-height:7.32px;color:#777;opacity:.5;">-</span>
<span style="left:556.67px;top:521.39px;font-size:6.1px;line-height:7.32px;color:#777;opacity:.5;">-</span>
<span style="left:600.37px;top:521.39px;font-size:6.1px;line-height:7.32px;color:#777;opacity:.5;">-</span>
<span style="left:644.07px;top:521.39px;font-size:6.1px;line-height:7.32px;color:#777;opacity:.5;">-</span>
<span style="left:687.77px;top:521.39px;font-size:6.1px;line-height:7.32px;color:#777;opacity:.5;">-</span>
<span style="left:731.47px;top:521.39px;font-size:6.1px;line-height:7.32px;color:#777;opacity:.5;">-</span>
<span style="left:775.17px;top:521.39px;font-size:6.1px;line-height:7.32px;color:#777;opacity:.5;">-</span>
<span style="left:818.87px;top:521.39px;font-size:6.1px;line-height:7.32px;color:#777;opacity:.5;">-</span>
<span style="left:862.57px;top:521.39px;font-size:6.1px;line-height:7.32px;color:#777;opacity:.5;">-</span>
<span style="left:906.27px;top:521.39px;font-size:6.1px;line-height:7.32px;color:#777;opacity:.5;">-</span>
<span style="left:947.87px;top:521.39px;font-size:6.1px;line-height:7.32px;color:#777;opacity:.5;">-</span>
<span style="left:989.87px;top:521.39px;font-size:6.1px;line-height:7.32px;color:#777;opacity:.5;">-</span>
<span style="left:250.77px;top:533.89px;font-size:6.1px;line-height:7.32px;color:#777;opacity:.5;">-</span>
<span style="left:294.47px;top:533.89px;font-size:6.1px;line-height:7.32px;color:#777;opacity:.5;">-</span>
<span style="left:338.17px;top:533.89px;font-size:6.1px;line-height:7.32px;color:#777;opacity:.5;">-</span>
<span style="left:381.87px;top:533.89px;font-size:6.1px;line-height:7.32px;color:#777;opacity:.5;">-</span>
<span style="left:425.57px;top:533.89px;font-size:6.1px;line-height:7.32px;color:#777;opacity:.5;">-</span>
<span style="left:469.27px;top:533.89px;font-size:6.1px;line-height:7.32px;color:#777;opacity:.5;">-</span>
<span style="left:512.97px;top:533.89px;font-size:6.1px;line-height:7.32px;color:#777;opacity:.5;">-</span>
<span style="left:556.67px;top:533.89px;font-size:6.1px;line-height:7.32px;color:#777;opacity:.5;">-</span>
<span style="left:600.37px;top:533.89px;font-size:6.1px;line-height:7.32px;color:#777;opacity:.5;">-</span>
<span style="left:644.07px;top:533.89px;font-size:6.1px;line-height:7.32px;color:#777;opacity:.5;">-</span>
<span style="left:687.77px;top:533.89px;font-size:6.1px;line-height:7.32px;color:#777;opacity:.5;">-</span>
<span style="left:731.47px;top:533.89px;font-size:6.1px;line-height:7.32px;color:#777;opacity:.5;">-</span>
<span style="left:775.17px;top:533.89px;font-size:6.1px;line-height:7.32px;color:#777;opacity:.5;">-</span>
<span style="left:818.87px;top:533.89px;font-size:6.1px;line-height:7.32px;color:#777;opacity:.5;">-</span>
<span style="left:862.57px;top:533.89px;font-size:6.1px;line-height:7.32px;color:#777;opacity:.5;">-</span>
<span style="left:906.27px;top:533.89px;font-size:6.1px;line-height:7.32px;color:#777;opacity:.5;">-</span>
<span style="left:947.87px;top:533.89px;font-size:6.1px;line-height:7.32px;color:#777;opacity:.5;">-</span>
<span style="left:989.87px;top:533.89px;font-size:6.1px;line-height:7.32px;color:#777;opacity:.5;">-</span>
<span style="left:250.77px;top:546.39px;font-size:6.1px;line-height:7.32px;color:#777;opacity:.5;">-</span>
<span style="left:294.47px;top:546.39px;font-size:6.1px;line-height:7.32px;color:#777;opacity:.5;">-</span>
<span style="left:338.17px;top:546.39px;font-size:6.1px;line-height:7.32px;color:#777;opacity:.5;">-</span>
<span style="left:381.87px;top:546.39px;font-size:6.1px;line-height:7.32px;color:#777;opacity:.5;">-</span>
<span style="left:425.57px;top:546.39px;font-size:6.1px;line-height:7.32px;color:#777;opacity:.5;">-</span>
<span style="left:469.27px;top:546.39px;font-size:6.1px;line-height:7.32px;color:#777;opacity:.5;">-</span>
<span style="left:512.97px;top:546.39px;font-size:6.1px;line-height:7.32px;color:#777;opacity:.5;">-</span>
<span style="left:556.67px;top:546.39px;font-size:6.1px;line-height:7.32px;color:#777;opacity:.5;">-</span>
<span style="left:600.37px;top:546.39px;font-size:6.1px;line-height:7.32px;color:#777;opacity:.5;">-</span>
<span style="left:644.07px;top:546.39px;font-size:6.1px;line-height:7.32px;color:#777;opacity:.5;">-</span>
<span style="left:687.77px;top:546.39px;font-size:6.1px;line-height:7.32px;color:#777;opacity:.5;">-</span>
<span style="left:731.47px;top:546.39px;font-size:6.1px;line-height:7.32px;color:#777;opacity:.5;">-</span>
<span style="left:775.17px;top:546.39px;font-size:6.1px;line-height:7.32px;color:#777;opacity:.5;">-</span>
<span style="left:818.87px;top:546.39px;font-size:6.1px;line-height:7.32px;color:#777;opacity:.5;">-</span>
<span style="left:862.57px;top:546.39px;font-size:6.1px;line-height:7.32px;color:#777;opacity:.5;">-</span>
<span style="left:906.27px;top:546.39px;font-size:6.1px;line-height:7.32px;color:#777;opacity:.5;">-</span>
<span style="left:947.87px;top:546.39px;font-size:6.1px;line-height:7.32px;color:#777;opacity:.5;">-</span>
<span style="left:989.87px;top:546.39px;font-size:6.1px;line-height:7.32px;color:#777;opacity:.5;">-</span>
<span style="left:250.77px;top:558.89px;font-size:6.1px;line-height:7.32px;color:#777;opacity:.5;">-</span>
<span style="left:294.47px;top:558.89px;font-size:6.1px;line-height:7.32px;color:#777;opacity:.5;">-</span>
<span style="left:338.17px;top:558.89px;font-size:6.1px;line-height:7.32px;color:#777;opacity:.5;">-</span>
<span style="left:381.87px;top:558.89px;font-size:6.1px;line-height:7.32px;color:#777;opacity:.5;">-</span>
<span style="left:425.57px;top:558.89px;font-size:6.1px;line-height:7.32px;color:#777;opacity:.5;">-</span>
<span style="left:469.27px;top:558.89px;font-size:6.1px;line-height:7.32px;color:#777;opacity:.5;">-</span>
<span style="left:512.97px;top:558.89px;font-size:6.1px;line-height:7.32px;color:#777;opacity:.5;">-</span>
<span style="left:556.67px;top:558.89px;font-size:6.1px;line-height:7.32px;color:#777;opacity:.5;">-</span>
<span style="left:600.37px;top:558.89px;font-size:6.1px;line-height:7.32px;color:#777;opacity:.5;">-</span>
<span style="left:644.07px;top:558.89px;font-size:6.1px;line-height:7.32px;color:#777;opacity:.5;">-</span>
<span style="left:687.77px;top:558.89px;font-size:6.1px;line-height:7.32px;color:#777;opacity:.5;">-</span>
<span style="left:731.47px;top:558.89px;font-size:6.1px;line-height:7.32px;color:#777;opacity:.5;">-</span>
<span style="left:775.17px;top:558.89px;font-size:6.1px;line-height:7.32px;color:#777;opacity:.5;">-</span>
<span style="left:818.87px;top:558.89px;font-size:6.1px;line-height:7.32px;color:#777;opacity:.5;">-</span>
<span style="left:862.57px;top:558.89px;font-size:6.1px;line-height:7.32px;color:#777;opacity:.5;">-</span>
<span style="left:906.27px;top:558.89px;font-size:6.1px;line-height:7.32px;color:#777;opacity:.5;">-</span>
<span style="left:947.87px;top:558.89px;font-size:6.1px;line-height:7.32px;color:#777;opacity:.5;">-</span>
<span style="left:989.87px;top:558.89px;font-size:6.1px;line-height:7.32px;color:#777;opacity:.5;">-</span>
<svg style="left:540px;top:545px" width="13" height="13" viewBox="0 0 13 13"><rect x=".5" y=".5" width="12" height="12" fill="#f4f4f4" stroke="#bdbdbd"/><rect x="2.5" y="2.5" width="5" height="3" fill="#3b5f94"/><rect x="2.5" y="6.5" width="5" height="4" fill="#fff" stroke="#888" stroke-width=".6"/><path d="M9 6l1.5 1.5L12 6" fill="#555"/></svg>
<!-- rowhdr -->
<div style="left:0.00px;top:63.80px;width:17.50px;height:495.10px;background:#e8e8e8;"></div>
<div style="left:16.90px;top:63.80px;width:0.90px;height:495.10px;background:#cfcfcf;"></div>
<div style="left:0.00px;top:73.50px;width:17.50px;height:1.00px;background:#c6c6c6;"></div>
<span style="left:6.07px;top:63.32px;font-size:9.8px;line-height:11.76px;color:#4a4a4a;transform:scaleX(0.870);transform-origin:center center;">1</span>
<div style="left:0.00px;top:92.50px;width:17.50px;height:1.00px;background:#c6c6c6;"></div>
<span style="left:6.07px;top:78.42px;font-size:9.8px;line-height:11.76px;color:#4a4a4a;transform:scaleX(0.870);transform-origin:center center;">2</span>
<div style="left:0.00px;top:101.50px;width:17.50px;height:1.00px;background:#c6c6c6;"></div>
<span style="left:6.07px;top:91.92px;font-size:9.8px;line-height:11.76px;color:#4a4a4a;transform:scaleX(0.870);transform-origin:center center;">3</span>
<div style="left:0.00px;top:121.00px;width:17.50px;height:1.00px;background:#c6c6c6;"></div>
<span style="left:6.07px;top:109.52px;font-size:9.8px;line-height:11.76px;color:#4a4a4a;transform:scaleX(0.870);transform-origin:center center;">4</span>
<div style="left:0.00px;top:133.03px;width:17.50px;height:1.00px;background:#c6c6c6;"></div>
<span style="left:6.07px;top:121.69px;font-size:9.8px;line-height:11.76px;color:#4a4a4a;transform:scaleX(0.870);transform-origin:center center;">5</span>
<div style="left:0.00px;top:145.57px;width:17.50px;height:1.00px;background:#c6c6c6;"></div>
<span style="left:6.07px;top:134.22px;font-size:9.8px;line-height:11.76px;color:#4a4a4a;transform:scaleX(0.870);transform-origin:center center;">6</span>
<div style="left:0.00px;top:158.10px;width:17.50px;height:1.00px;background:#c6c6c6;"></div>
<span style="left:6.07px;top:146.75px;font-size:9.8px;line-height:11.76px;color:#4a4a4a;transform:scaleX(0.870);transform-origin:center center;">7</span>
<div style="left:0.00px;top:170.63px;width:17.50px;height:1.00px;background:#c6c6c6;"></div>
<span style="left:6.07px;top:159.29px;font-size:9.8px;line-height:11.76px;color:#4a4a4a;transform:scaleX(0.870);transform-origin:center center;">8</span>
<div style="left:0.00px;top:183.16px;width:17.50px;height:1.00px;background:#c6c6c6;"></div>
<span style="left:6.07px;top:171.82px;font-size:9.8px;line-height:11.76px;color:#4a4a4a;transform:scaleX(0.870);transform-origin:center center;">9</span>
<div style="left:0.00px;top:195.70px;width:17.50px;height:1.00px;background:#c6c6c6;"></div>
<span style="left:3.35px;top:184.35px;font-size:9.8px;line-height:11.76px;color:#4a4a4a;transform:scaleX(0.870);transform-origin:center center;">10</span>
<div style="left:0.00px;top:208.23px;width:17.50px;height:1.00px;background:#c6c6c6;"></div>
<span style="left:3.71px;top:196.88px;font-size:9.8px;line-height:11.76px;color:#4a4a4a;transform:scaleX(0.870);transform-origin:center center;">11</span>
<div style="left:0.00px;top:220.76px;width:17.50px;height:1.00px;background:#c6c6c6;"></div>
<span style="left:3.35px;top:209.42px;font-size:9.8px;line-height:11.76px;color:#4a4a4a;transform:scaleX(0.870);transform-origin:center center;">12</span>
<div style="left:0.00px;top:233.30px;width:17.50px;height:1.00px;background:#c6c6c6;"></div>
<span style="left:3.35px;top:221.95px;font-size:9.8px;line-height:11.76px;color:#4a4a4a;transform:scaleX(0.870);transform-origin:center center;">13</span>
<div style="left:0.00px;top:245.83px;width:17.50px;height:1.00px;background:#c6c6c6;"></div>
<span style="left:3.35px;top:234.48px;font-size:9.8px;line-height:11.76px;color:#4a4a4a;transform:scaleX(0.870);transform-origin:center center;">14</span>
<div style="left:0.00px;top:258.36px;width:17.50px;height:1.00px;background:#c6c6c6;"></div>
<span style="left:3.35px;top:247.02px;font-size:9.8px;line-height:11.76px;color:#4a4a4a;transform:scaleX(0.870);transform-origin:center center;">15</span>
<div style="left:0.00px;top:270.90px;width:17.50px;height:1.00px;background:#c6c6c6;"></div>
<span style="left:3.35px;top:259.55px;font-size:9.8px;line-height:11.76px;color:#4a4a4a;transform:scaleX(0.870);transform-origin:center center;">16</span>
<div style="left:0.00px;top:283.43px;width:17.50px;height:1.00px;background:#c6c6c6;"></div>
<span style="left:3.35px;top:272.08px;font-size:9.8px;line-height:11.76px;color:#4a4a4a;transform:scaleX(0.870);transform-origin:center center;">17</span>
<div style="left:0.00px;top:295.96px;width:17.50px;height:1.00px;background:#c6c6c6;"></div>
<span style="left:3.35px;top:284.62px;font-size:9.8px;line-height:11.76px;color:#4a4a4a;transform:scaleX(0.870);transform-origin:center center;">18</span>
<div style="left:0.00px;top:308.50px;width:17.50px;height:1.00px;background:#c6c6c6;"></div>
<span style="left:3.35px;top:297.15px;font-size:9.8px;line-height:11.76px;color:#4a4a4a;transform:scaleX(0.870);transform-origin:center center;">19</span>
<div style="left:0.00px;top:321.03px;width:17.50px;height:1.00px;background:#c6c6c6;"></div>
<span style="left:3.35px;top:309.68px;font-size:9.8px;line-height:11.76px;color:#4a4a4a;transform:scaleX(0.870);transform-origin:center center;">20</span>
<div style="left:0.00px;top:333.56px;width:17.50px;height:1.00px;background:#c6c6c6;"></div>
<span style="left:3.35px;top:322.21px;font-size:9.8px;line-height:11.76px;color:#4a4a4a;transform:scaleX(0.870);transform-origin:center center;">21</span>
<div style="left:0.00px;top:346.09px;width:17.50px;height:1.00px;background:#c6c6c6;"></div>
<span style="left:3.35px;top:334.75px;font-size:9.8px;line-height:11.76px;color:#4a4a4a;transform:scaleX(0.870);transform-origin:center center;">22</span>
<div style="left:0.00px;top:357.00px;width:17.50px;height:1.00px;background:#c6c6c6;"></div>
<span style="left:3.35px;top:346.17px;font-size:9.8px;line-height:11.76px;color:#4a4a4a;transform:scaleX(0.870);transform-origin:center center;">23</span>
<div style="left:0.00px;top:366.50px;width:17.50px;height:1.00px;background:#c6c6c6;"></div>
<span style="left:3.35px;top:356.02px;font-size:9.8px;line-height:11.76px;color:#4a4a4a;transform:scaleX(0.870);transform-origin:center center;">24</span>
<div style="left:0.00px;top:379.80px;width:17.50px;height:1.00px;background:#c6c6c6;"></div>
<span style="left:3.35px;top:368.07px;font-size:9.8px;line-height:11.76px;color:#4a4a4a;transform:scaleX(0.870);transform-origin:center center;">25</span>
<div style="left:0.00px;top:393.50px;width:17.50px;height:1.00px;background:#c6c6c6;"></div>
<span style="left:3.35px;top:381.57px;font-size:9.8px;line-height:11.76px;color:#4a4a4a;transform:scaleX(0.870);transform-origin:center center;">26</span>
<div style="left:0.00px;top:405.50px;width:17.50px;height:1.00px;background:#c6c6c6;"></div>
<span style="left:3.35px;top:394.42px;font-size:9.8px;line-height:11.76px;color:#4a4a4a;transform:scaleX(0.870);transform-origin:center center;">27</span>
<div style="left:0.00px;top:418.30px;width:17.50px;height:1.00px;background:#c6c6c6;"></div>
<span style="left:3.35px;top:406.82px;font-size:9.8px;line-height:11.76px;color:#4a4a4a;transform:scaleX(0.870);transform-origin:center center;">28</span>
<div style="left:0.00px;top:430.80px;width:17.50px;height:1.00px;background:#c6c6c6;"></div>
<span style="left:3.35px;top:419.47px;font-size:9.8px;line-height:11.76px;color:#4a4a4a;transform:scaleX(0.870);transform-origin:center center;">29</span>
<div style="left:0.00px;top:443.30px;width:17.50px;height:1.00px;background:#c6c6c6;"></div>
<span style="left:3.35px;top:431.97px;font-size:9.8px;line-height:11.76px;color:#4a4a4a;transform:scaleX(0.870);transform-origin:center center;">30</span>
<div style="left:0.00px;top:455.80px;width:17.50px;height:1.00px;background:#c6c6c6;"></div>
<span style="left:3.35px;top:444.47px;font-size:9.8px;line-height:11.76px;color:#4a4a4a;transform:scaleX(0.870);transform-origin:center center;">31</span>
<div style="left:0.00px;top:468.30px;width:17.50px;height:1.00px;background:#c6c6c6;"></div>
<span style="left:3.35px;top:456.97px;font-size:9.8px;line-height:11.76px;color:#4a4a4a;transform:scaleX(0.870);transform-origin:center center;">32</span>
<div style="left:0.00px;top:480.80px;width:17.50px;height:1.00px;background:#c6c6c6;"></div>
<span style="left:3.35px;top:469.47px;font-size:9.8px;line-height:11.76px;color:#4a4a4a;transform:scaleX(0.870);transform-origin:center center;">33</span>
<div style="left:0.00px;top:493.30px;width:17.50px;height:1.00px;background:#c6c6c6;"></div>
<span style="left:3.35px;top:481.97px;font-size:9.8px;line-height:11.76px;color:#4a4a4a;transform:scaleX(0.870);transform-origin:center center;">34</span>
<div style="left:0.00px;top:505.80px;width:17.50px;height:1.00px;background:#c6c6c6;"></div>
<span style="left:3.35px;top:494.47px;font-size:9.8px;line-height:11.76px;color:#4a4a4a;transform:scaleX(0.870);transform-origin:center center;">35</span>
<div style="left:0.00px;top:518.30px;width:17.50px;height:1.00px;background:#c6c6c6;"></div>
<span style="left:3.35px;top:506.97px;font-size:9.8px;line-height:11.76px;color:#4a4a4a;transform:scaleX(0.870);transform-origin:center center;">36</span>
<div style="left:0.00px;top:530.80px;width:17.50px;height:1.00px;background:#c6c6c6;"></div>
<span style="left:3.35px;top:519.47px;font-size:9.8px;line-height:11.76px;color:#4a4a4a;transform:scaleX(0.870);transform-origin:center center;">37</span>
<div style="left:0.00px;top:543.30px;width:17.50px;height:1.00px;background:#c6c6c6;"></div>
<span style="left:3.35px;top:531.97px;font-size:9.8px;line-height:11.76px;color:#4a4a4a;transform:scaleX(0.870);transform-origin:center center;">38</span>
<div style="left:0.00px;top:555.80px;width:17.50px;height:1.00px;background:#c6c6c6;"></div>
<span style="left:3.35px;top:544.47px;font-size:9.8px;line-height:11.76px;color:#4a4a4a;transform:scaleX(0.870);transform-origin:center center;">39</span>
<!-- colhdr -->
<div style="left:0.00px;top:49.50px;width:1000.00px;height:14.30px;background:#e8e8e8;"></div>
<div style="left:0.00px;top:63.10px;width:988.00px;height:0.90px;background:#cfcfcf;"></div>
<svg style="left:8.3px;top:54.5px" width="8" height="7"><path d="M7.6 0V6.4H0Z" fill="#b4b4b4"/></svg>
<div style="left:22.20px;top:52.50px;width:1.00px;height:11.30px;background:#c6c6c6;"></div>
<span style="left:16.80px;top:51.24px;font-size:9.6px;line-height:11.52px;color:#3a3a3a;transform:scaleX(0.930);transform-origin:center center;">A</span>
<div style="left:30.10px;top:52.50px;width:1.00px;height:11.30px;background:#c6c6c6;"></div>
<span style="left:23.10px;top:51.24px;font-size:9.6px;line-height:11.52px;color:#3a3a3a;transform:scaleX(0.930);transform-origin:center center;">B</span>
<div style="left:38.80px;top:52.50px;width:1.00px;height:11.30px;background:#c6c6c6;"></div>
<span style="left:31.93px;top:51.24px;font-size:9.6px;line-height:11.52px;color:#3a3a3a;transform:scaleX(0.930);transform-origin:center center;">C</span>
<div style="left:68.80px;top:52.50px;width:1.00px;height:11.30px;background:#c6c6c6;"></div>
<span style="left:51.33px;top:51.24px;font-size:9.6px;line-height:11.52px;color:#3a3a3a;transform:scaleX(0.930);transform-origin:center center;">D</span>
<div style="left:100.00px;top:52.50px;width:1.00px;height:11.30px;background:#c6c6c6;"></div>
<span style="left:82.20px;top:51.24px;font-size:9.6px;line-height:11.52px;color:#3a3a3a;transform:scaleX(0.930);transform-origin:center center;">E</span>
<div style="left:119.50px;top:52.50px;width:1.00px;height:11.30px;background:#c6c6c6;"></div>
<span style="left:107.27px;top:51.24px;font-size:9.6px;line-height:11.52px;color:#3a3a3a;transform:scaleX(0.930);transform-origin:center center;">F</span>
<div style="left:155.50px;top:52.50px;width:1.00px;height:11.30px;background:#c6c6c6;"></div>
<span style="left:134.47px;top:51.24px;font-size:9.6px;line-height:11.52px;color:#3a3a3a;transform:scaleX(0.930);transform-origin:center center;">G</span>
<div style="left:191.60px;top:52.50px;width:1.00px;height:11.30px;background:#c6c6c6;"></div>
<span style="left:170.53px;top:51.24px;font-size:9.6px;line-height:11.52px;color:#3a3a3a;transform:scaleX(0.930);transform-origin:center center;">H</span>
<div style="left:212.20px;top:52.50px;width:1.00px;height:11.30px;background:#c6c6c6;"></div>
<span style="left:200.77px;top:51.24px;font-size:9.6px;line-height:11.52px;color:#3a3a3a;transform:scaleX(0.930);transform-origin:center center;">I</span>
<div style="left:255.90px;top:52.50px;width:1.00px;height:11.30px;background:#c6c6c6;"></div>
<span style="left:232.15px;top:51.24px;font-size:9.6px;line-height:11.52px;color:#3a3a3a;transform:scaleX(0.930);transform-origin:center center;">J</span>
<div style="left:299.60px;top:52.50px;width:1.00px;height:11.30px;background:#c6c6c6;"></div>
<span style="left:275.05px;top:51.24px;font-size:9.6px;line-height:11.52px;color:#3a3a3a;transform:scaleX(0.930);transform-origin:center center;">K</span>
<div style="left:343.30px;top:52.50px;width:1.00px;height:11.30px;background:#c6c6c6;"></div>
<span style="left:319.28px;top:51.24px;font-size:9.6px;line-height:11.52px;color:#3a3a3a;transform:scaleX(0.930);transform-origin:center center;">L</span>
<div style="left:387.00px;top:52.50px;width:1.00px;height:11.30px;background:#c6c6c6;"></div>
<span style="left:361.65px;top:51.24px;font-size:9.6px;line-height:11.52px;color:#3a3a3a;transform:scaleX(0.930);transform-origin:center center;">M</span>
<div style="left:387.50px;top:50.30px;width:43.70px;height:13.50px;background:#d2d2d2;"></div>
<div style="left:387.50px;top:61.90px;width:43.70px;height:1.70px;background:#3d9160;"></div>
<div style="left:430.70px;top:52.50px;width:1.00px;height:11.30px;background:#c6c6c6;"></div>
<span style="left:405.88px;top:51.24px;font-size:9.6px;line-height:11.52px;color:#3a3a3a;transform:scaleX(0.930);transform-origin:center center;">N</span>
<div style="left:474.40px;top:52.50px;width:1.00px;height:11.30px;background:#c6c6c6;"></div>
<span style="left:449.32px;top:51.24px;font-size:9.6px;line-height:11.52px;color:#3a3a3a;transform:scaleX(0.930);transform-origin:center center;">O</span>
<div style="left:518.10px;top:52.50px;width:1.00px;height:11.30px;background:#c6c6c6;"></div>
<span style="left:493.55px;top:51.24px;font-size:9.6px;line-height:11.52px;color:#3a3a3a;transform:scaleX(0.930);transform-origin:center center;">P</span>
<div style="left:561.80px;top:52.50px;width:1.00px;height:11.30px;background:#c6c6c6;"></div>
<span style="left:536.72px;top:51.24px;font-size:9.6px;line-height:11.52px;color:#3a3a3a;transform:scaleX(0.930);transform-origin:center center;">Q</span>
<div style="left:605.50px;top:52.50px;width:1.00px;height:11.30px;background:#c6c6c6;"></div>
<span style="left:580.68px;top:51.24px;font-size:9.6px;line-height:11.52px;color:#3a3a3a;transform:scaleX(0.930);transform-origin:center center;">R</span>
<div style="left:649.20px;top:52.50px;width:1.00px;height:11.30px;background:#c6c6c6;"></div>
<span style="left:624.65px;top:51.24px;font-size:9.6px;line-height:11.52px;color:#3a3a3a;transform:scaleX(0.930);transform-origin:center center;">S</span>
<div style="left:692.90px;top:52.50px;width:1.00px;height:11.30px;background:#c6c6c6;"></div>
<span style="left:668.62px;top:51.24px;font-size:9.6px;line-height:11.52px;color:#3a3a3a;transform:scaleX(0.930);transform-origin:center center;">T</span>
<div style="left:736.60px;top:52.50px;width:1.00px;height:11.30px;background:#c6c6c6;"></div>
<span style="left:711.78px;top:51.24px;font-size:9.6px;line-height:11.52px;color:#3a3a3a;transform:scaleX(0.930);transform-origin:center center;">U</span>
<div style="left:780.30px;top:52.50px;width:1.00px;height:11.30px;background:#c6c6c6;"></div>
<span style="left:755.75px;top:51.24px;font-size:9.6px;line-height:11.52px;color:#3a3a3a;transform:scaleX(0.930);transform-origin:center center;">V</span>
<div style="left:824.00px;top:52.50px;width:1.00px;height:11.30px;background:#c6c6c6;"></div>
<span style="left:798.12px;top:51.24px;font-size:9.6px;line-height:11.52px;color:#3a3a3a;transform:scaleX(0.930);transform-origin:center center;">W</span>
<div style="left:867.70px;top:52.50px;width:1.00px;height:11.30px;background:#c6c6c6;"></div>
<span style="left:843.15px;top:51.24px;font-size:9.6px;line-height:11.52px;color:#3a3a3a;transform:scaleX(0.930);transform-origin:center center;">X</span>
<div style="left:911.40px;top:52.50px;width:1.00px;height:11.30px;background:#c6c6c6;"></div>
<span style="left:886.85px;top:51.24px;font-size:9.6px;line-height:11.52px;color:#3a3a3a;transform:scaleX(0.930);transform-origin:center center;">Y</span>
<div style="left:953.00px;top:52.50px;width:1.00px;height:11.30px;background:#c6c6c6;"></div>
<span style="left:929.77px;top:51.24px;font-size:9.6px;line-height:11.52px;color:#3a3a3a;transform:scaleX(0.930);transform-origin:center center;">Z</span>
<div style="left:995.00px;top:52.50px;width:1.00px;height:11.30px;background:#c6c6c6;"></div>
<span style="left:968.10px;top:51.24px;font-size:9.6px;line-height:11.52px;color:#3a3a3a;transform:scaleX(0.930);transform-origin:center center;">AA</span>
<div style="left:17.00px;top:52.50px;width:1.00px;height:11.30px;background:#c6c6c6;"></div>
<!-- vsb -->
<div style="left:988.00px;top:49.50px;width:12.00px;height:509.40px;background:#f9f9f9;"></div>
<div style="left:987.10px;top:63.80px;width:1.00px;height:495.10px;background:#e3e3e3;"></div>
<div style="left:987.50px;top:52.50px;width:1.00px;height:11.30px;background:#c6c6c6;"></div>
<svg style="left:990.3px;top:54.3px" width="7" height="5"><path d="M.2 4.6L3.5.6 6.8 4.6z" fill="#707070"/></svg>
<div style="left:991.20px;top:62.50px;width:5.30px;height:161.00px;background:#7d7d7d;border-radius:1px;"></div>
<svg style="left:990.5px;top:549.5px" width="7" height="5"><path d="M0 .4L3.5 4.6 7 .4z" fill="#5a5a5a"/></svg>
<!-- menu -->
<div style="left:0.00px;top:31.00px;width:1000.00px;height:18.50px;background:#e8ebf0;"></div>
<span style="left:13.00px;top:36.04px;font-size:9.6px;line-height:11.52px;color:#2f2f2f;transform:scaleX(0.905);transform-origin:left center;">File</span>
<span style="left:44.00px;top:36.04px;font-size:9.6px;line-height:11.52px;color:#2f2f2f;transform:scaleX(0.957);transform-origin:left center;">Home</span>
<span style="left:80.00px;top:36.04px;font-size:9.6px;line-height:11.52px;color:#2f2f2f;transform:scaleX(0.979);transform-origin:left center;">Insert</span>
<span style="left:116.00px;top:36.04px;font-size:9.6px;line-height:11.52px;color:#2f2f2f;transform:scaleX(0.960);transform-origin:left center;">Draw</span>
<span style="left:149.00px;top:36.04px;font-size:9.6px;line-height:11.52px;color:#2f2f2f;transform:scaleX(0.918);transform-origin:left center;">Page Layout</span>
<span style="left:211.00px;top:36.04px;font-size:9.6px;line-height:11.52px;color:#2f2f2f;transform:scaleX(0.937);transform-origin:left center;">Formulas</span>
<span style="left:260.00px;top:36.04px;font-size:9.6px;line-height:11.52px;color:#2f2f2f;transform:scaleX(0.962);transform-origin:left center;">Data</span>
<span style="left:292.00px;top:36.04px;font-size:9.6px;line-height:11.52px;color:#2f2f2f;transform:scaleX(0.905);transform-origin:left center;">Review</span>
<span style="left:333.00px;top:36.04px;font-size:9.6px;line-height:11.52px;color:#2f2f2f;transform:scaleX(0.945);transform-origin:left center;">View</span>
<span style="left:365.00px;top:36.04px;font-size:9.6px;line-height:11.52px;color:#2f2f2f;transform:scaleX(0.926);transform-origin:left center;">Developer</span>
<span style="left:417.00px;top:36.04px;font-size:9.6px;line-height:11.52px;color:#2f2f2f;transform:scaleX(0.962);transform-origin:left center;">Help</span>
<span style="left:449.00px;top:36.04px;font-size:9.6px;line-height:11.52px;color:#2f2f2f;transform:scaleX(0.952);transform-origin:left center;">Acrobat</span>
<span style="left:493.00px;top:36.04px;font-size:9.6px;line-height:11.52px;color:#2f2f2f;transform:scaleX(0.908);transform-origin:left center;">Power Pivot</span>
<div style="left:946.10px;top:33.90px;width:46.20px;height:14.50px;background:#107c41;border-radius:2.5px;"></div>
<svg style="left:948.3px;top:37.4px" width="7.8" height="7.8" viewBox="0 0 10 10"><path d="M1 4.2v4.6h6.6V6.6" fill="none" stroke="#fff" stroke-width=".9"/><path d="M3.2 6.2C3.6 4 5 3 6.8 3V1.4L9.4 3.8 6.8 6.2V4.6C5.4 4.6 4.2 5 3.2 6.2z" fill="none" stroke="#fff" stroke-width=".8"/></svg>
<span style="left:960.20px;top:35.92px;font-size:9.3px;line-height:11.16px;color:#fff;font-weight:bold;transform:scaleX(0.843);transform-origin:left center;">Share</span>
<svg style="left:985px;top:40px" width="5" height="4"><path d="M.3.5l2.2 2.4L4.7.5" fill="none" stroke="#fff" stroke-width="1.25"/></svg>
<!-- title -->
<div style="left:0.00px;top:0.00px;width:1000.00px;height:31.00px;background:#107c41;"></div>
<div style="left:0.00px;top:26.00px;width:1000.00px;height:5.00px;background:#12693a;"></div>
<div style="left:0.00px;top:0.00px;width:1000.00px;height:3.50px;background:#168246;"></div>
<div style="left:385.70px;top:5.60px;width:239.10px;height:20.40px;background:#d0e4d7;box-shadow:0 0 0 1.4px #0e6a39;"></div>
<svg style="left:392.5px;top:9.5px" width="12" height="12" viewBox="0 0 12 12"><circle cx="7" cy="4.8" r="3.1" fill="none" stroke="#2f634a" stroke-width="1.1"/><path d="M4.8 7.1L1.4 10.6" stroke="#2f634a" stroke-width="1.2" stroke-linecap="round"/></svg>
<span style="left:412.80px;top:9.92px;font-size:9.3px;line-height:11.16px;color:#2f634a;transform:scaleX(0.889);transform-origin:left center;">Search</span>
<span style="left:117.00px;top:11.26px;font-size:8.4px;line-height:10.08px;color:#f2f8f4;transform:scaleX(0.904);transform-origin:left center;">Lithium Refinery 20 Year Financial Model.xlsx  -  Excel</span>
<svg style="left:9.8px;top:9.7px" width="12" height="12" viewBox="0 0 12 12"><rect x="4.2" y="1.2" width="7" height="9.6" fill="none" stroke="#fff" stroke-width=".9"/><path d="M4.2 4.4h7M4.2 7.6h7M8 1.2v9.6" stroke="#fff" stroke-width=".8"/><rect x="0" y="2.6" width="6.4" height="6.8" fill="#fff"/><path d="M1.7 4.2l3 3.6M4.7 4.2l-3 3.6" stroke="#217346" stroke-width="1"/></svg>
<svg style="left:31px;top:9.9px" width="11" height="11" viewBox="0 0 12 12"><path d="M.9.9h8.6l1.6 1.6v8.6H.9z" fill="none" stroke="#fff" stroke-width=".95"/><path d="M3 .9v3.2h5.2V.9M2.8 11.1V6.6h6.4v4.5" fill="none" stroke="#fff" stroke-width=".9"/></svg>
<svg style="left:49px;top:9px" width="13" height="13" viewBox="0 0 13 13"><path d="M1.6 1.6v4.3h4.3" fill="none" stroke="#fff" stroke-width="1.1"/><path d="M1.9 5.6C3.4 2.6 7 1.7 9.3 3.6c2.4 2 1.6 5.4-2.9 8.3" fill="none" stroke="#fff" stroke-width="1.1"/></svg>
<svg style="left:64px;top:14.3px" width="4" height="3"><path d="M.2 .3h3.4L1.9 2.3z" fill="#fff"/></svg>
<svg style="left:71.8px;top:9px;opacity:.24" width="13" height="13" viewBox="0 0 13 13"><g transform="translate(13,0) scale(-1,1)"><path d="M1.6 1.6v4.3h4.3" fill="none" stroke="#fff" stroke-width="1.1"/><path d="M1.9 5.6C3.4 2.6 7 1.7 9.3 3.6c2.4 2 1.6 5.4-2.9 8.3" fill="none" stroke="#fff" stroke-width="1.1"/></g></svg>
<svg style="left:89px;top:14.3px;opacity:.24" width="4" height="3"><path d="M.2 .3h3.4L1.9 2.3z" fill="#fff"/></svg>
<svg style="left:102.3px;top:13.2px" width="5" height="6"><path d="M.3 .6h4.2" stroke="#fff" stroke-width=".9"/><path d="M.3 2.6h4.2L2.4 5.2z" fill="#fff"/></svg>
<div style="left:883.8px;top:7.8px;width:15.4px;height:15.4px;border-radius:50%;background:#931a28"></div>
<span style="left:887.89px;top:12.58px;font-size:5.2px;line-height:6.24px;color:#f3dede;">RS</span>
<svg style="left:918.3px;top:10.3px" width="10" height="10"><path d="M.2 5h8" stroke="#fff" stroke-width="1"/></svg>
<svg style="left:949.4px;top:11.3px" width="9" height="9"><rect x=".6" y="2.4" width="5.2" height="5.2" rx=".9" fill="none" stroke="#fff" stroke-width="1"/><path d="M2.4 2.4V1.7A1 1 0 0 1 3.4 .7H6.4A1.2 1.2 0 0 1 7.6 1.9V4.9A1 1 0 0 1 6.6 5.9H5.9" fill="none" stroke="#fff" stroke-width="1"/></svg>
<svg style="left:980.6px;top:11.4px" width="9" height="9"><path d="M.6 .6l7.2 7.2M7.8 .6l-7.2 7.2" stroke="#fff" stroke-width="1"/></svg>
<!-- tabs -->
<div style="left:0.00px;top:558.90px;width:1000.00px;height:21.30px;background:#e6e8ec;"></div>
<svg style="left:15.5px;top:564.5px" width="7" height="9"><path d="M5.4 1L1.6 4.5 5.4 8" fill="none" stroke="#777" stroke-width="1"/></svg>
<svg style="left:36px;top:564.5px;opacity:.3" width="7" height="9"><path d="M1.6 1L5.4 4.5 1.6 8" fill="none" stroke="#777" stroke-width="1"/></svg>
<svg style="left:55.5px;top:567.5px" width="9" height="3"><circle cx="1.2" cy="1.5" r=".95" fill="#333"/><circle cx="4.4" cy="1.5" r=".95" fill="#333"/><circle cx="7.6" cy="1.5" r=".95" fill="#333"/></svg>
<div style="left:73.30px;top:560.90px;width:63.00px;height:15.40px;background:#ffff9a;"></div>
<span style="left:79.00px;top:563.70px;font-size:10px;line-height:12.00px;color:#303030;transform:scaleX(0.832);transform-origin:left center;">CAPEX 2044</span>
<div style="left:140.30px;top:560.90px;width:57.70px;height:15.40px;background:#ffff9a;"></div>
<span style="left:146.50px;top:563.70px;font-size:10px;line-height:12.00px;color:#303030;transform:scaleX(0.843);transform-origin:left center;">OPEX 2044</span>
<span style="left:209.00px;top:563.70px;font-size:10px;line-height:12.00px;color:#303030;transform:scaleX(0.888);transform-origin:left center;">Key Metrics Charts</span>
<span style="left:301.00px;top:563.70px;font-size:10px;line-height:12.00px;color:#303030;transform:scaleX(0.871);transform-origin:left center;">Sales Summary Charts</span>
<span style="left:408.50px;top:563.70px;font-size:10px;line-height:12.00px;color:#303030;transform:scaleX(0.866);transform-origin:left center;">Charts</span>
<span style="left:450.50px;top:563.70px;font-size:10px;line-height:12.00px;color:#303030;transform:scaleX(0.825);transform-origin:left center;">BEA</span>
<div style="left:477.50px;top:560.90px;width:48.30px;height:15.40px;background:#ffff9a;"></div>
<span style="left:484.00px;top:563.70px;font-size:10px;line-height:12.00px;color:#303030;transform:scaleX(0.824);transform-origin:left center;">Expenses</span>
<div style="left:531.30px;top:560.90px;width:91.40px;height:15.40px;background:#ffff9a;"></div>
<span style="left:538.00px;top:563.70px;font-size:10px;line-height:12.00px;color:#303030;transform:scaleX(0.872);transform-origin:left center;">COGS Assumptions</span>
<div style="left:730.00px;top:560.90px;width:59.00px;height:15.40px;background:#ffff9a;"></div>
<span style="left:736.60px;top:563.70px;font-size:10px;line-height:12.00px;color:#303030;transform:scaleX(0.856);transform-origin:left center;">CAPS Table</span>
<span style="left:799.30px;top:563.70px;font-size:10px;line-height:12.00px;color:#303030;transform:scaleX(0.889);transform-origin:left center;">Chart Data</span>
<div style="left:627.80px;top:558.90px;width:98.00px;height:19.30px;background:#fff;"></div>
<span style="left:633.00px;top:561.70px;font-size:10px;line-height:12.00px;color:#2a2a2a;font-weight:bold;transform:scaleX(0.832);transform-origin:left center;">Salaries Assumptions</span>
<div style="left:633.00px;top:574.40px;width:86.60px;height:1.30px;background:#1f8a4c;"></div>
<svg style="left:878.3px;top:564.9px" width="8" height="8"><path d="M3.9 .2v7.4M.2 3.9h7.4" stroke="#303030" stroke-width=".95"/></svg>
<svg style="left:930.5px;top:564px" width="3" height="10"><circle cx="1.5" cy="1.5" r=".9" fill="#555"/><circle cx="1.5" cy="5" r=".9" fill="#555"/><circle cx="1.5" cy="8.5" r=".9" fill="#555"/></svg>
<svg style="left:945px;top:565.5px" width="5" height="7"><path d="M4.6.4L.6 3.5l4 3.1z" fill="#5a5a5a"/></svg>
<div style="left:953.60px;top:566.00px;width:11.40px;height:6.00px;background:#6f6f6f;border-radius:1.5px;"></div>
<svg style="left:980.5px;top:565.5px" width="5" height="7"><path d="M.4.4l4 3.1-4 3.1z" fill="#5a5a5a"/></svg>
<!-- status -->
<div style="left:0.00px;top:580.20px;width:1000.00px;height:10.80px;background:#f3f3f3;"></div>
<span style="left:7.70px;top:582.64px;font-size:7.6px;line-height:9.12px;color:#555;transform:scaleX(0.833);transform-origin:left center;">Ready</span>
<svg style="left:39.6px;top:582.8px" width="9.6" height="8.4" viewBox="0 0 9 8"><rect x=".5" y=".5" width="8" height="7" fill="none" stroke="#444" stroke-width=".9"/><path d="M.5 3h8M3.3 .5v7M6 3v4.5" stroke="#444" stroke-width=".8"/><circle cx="6.4" cy="5.6" r="1.5" fill="#444"/></svg>
<svg style="left:59.8px;top:582.6px" width="9" height="9" viewBox="0 0 9 9"><circle cx="4.5" cy="1.6" r="1.1" fill="#333"/><path d="M.8 3.2l3.7.7 3.7-.7M4.5 3.9v2M4.5 5.6L2.6 8.6M4.5 5.6l1.9 3" fill="none" stroke="#333" stroke-width=".9"/></svg>
<span style="left:72.30px;top:583.36px;font-size:7.4px;line-height:8.88px;color:#262626;font-weight:bold;transform:scaleX(0.890);transform-origin:left center;">Accessibility: Investigate</span>
<div style="left:811.00px;top:580.80px;width:14.50px;height:10.80px;background:#dcdcdc;"></div>
<svg style="left:813.6px;top:582.7px" width="10" height="8.2" viewBox="0 0 11 9"><rect x=".5" y=".5" width="10" height="8" fill="none" stroke="#333"/><path d="M.5 3.2h10M.5 5.9h10M3.8.5v8M7.2.5v8" stroke="#333" stroke-width=".8"/></svg>
<svg style="left:840px;top:582.5px" width="10" height="9" viewBox="0 0 10 9"><rect x=".5" y=".5" width="9" height="8" fill="#8a8a8a" stroke="#444"/><path d="M2.6 1v7M5 1v7M7.4 1v7" stroke="#555" stroke-width=".8"/></svg>
<svg style="left:866px;top:582.5px" width="10" height="9" viewBox="0 0 10 9"><rect x=".5" y=".5" width="9" height="8" fill="none" stroke="#444"/><path d="M.5 5.5h5.5V.5" fill="none" stroke="#444" stroke-width=".9"/></svg>
<span style="left:888.30px;top:580.90px;font-size:9px;line-height:10.80px;color:#444;">-</span>
<div style="left:895.50px;top:586.40px;width:66.50px;height:0.90px;background:#9a9a9a;"></div>
<div style="left:927.90px;top:583.00px;width:2.10px;height:7.40px;background:#444;"></div>
<span style="left:964.16px;top:581.60px;font-size:8px;line-height:9.60px;color:#444;">+</span>
<span style="left:978.60px;top:583.04px;font-size:6.6px;line-height:7.92px;color:#5a5a5a;transform:scaleX(0.865);transform-origin:left center;">100%</span>
</div></body></html>
